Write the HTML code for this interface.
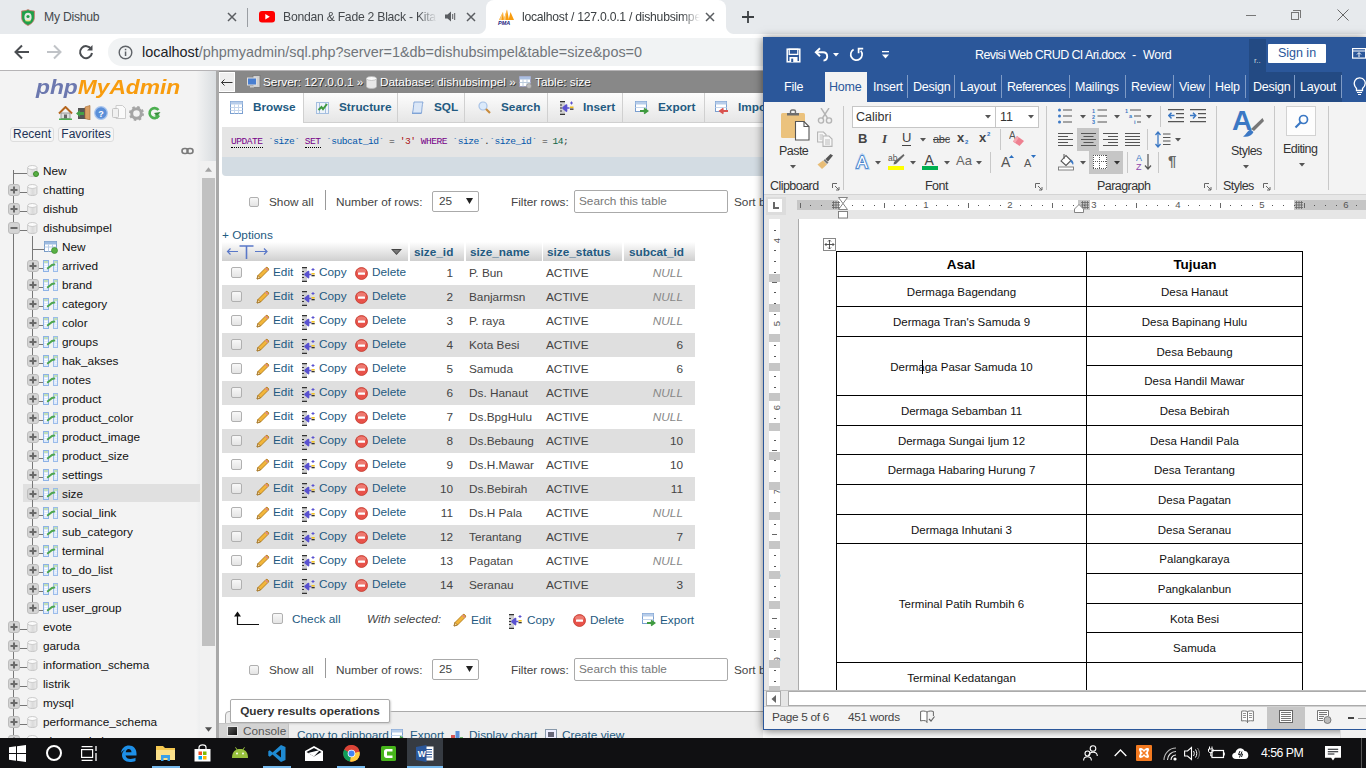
<!DOCTYPE html>
<html><head><meta charset="utf-8">
<style>
*{box-sizing:border-box;margin:0;padding:0}
html,body{width:1366px;height:768px;overflow:hidden;background:#fff;font-family:"Liberation Sans",sans-serif;}
.abs{position:absolute}
#root{position:relative;width:1366px;height:768px;overflow:hidden}
/* chrome */
#tabstrip{left:0;top:0;width:1366px;height:34px;background:#e7eaed}
#toolbar{left:0;top:34px;width:1366px;height:37px;background:#fff;border-bottom:1px solid #b6b4b6}
.tabtxt{letter-spacing:-0.25px;font-size:12.200px;color:#45494d;top:9px;line-height:16px;white-space:nowrap;overflow:hidden}
#url{left:108px;top:38px;width:700px;height:28px;border-radius:14px 0 0 14px;background:#f1f3f4}
/* pma nav */
#nav{left:0;top:71px;width:216px;height:667px;background:#f3f3f3;overflow:hidden}
#navres{left:216px;top:71px;width:3px;height:667px;background:#a9a9a9}
#main{left:219px;top:71px;width:544px;height:667px;background:#fff;overflow:hidden;font-size:13px;color:#444}
.tree{font-size:11.800px;color:#111;white-space:nowrap;height:19px;line-height:19px;margin-top:2px}
/* word */
#word{left:763px;top:37px;width:603px;height:693px;background:#f3f3f3;overflow:hidden;box-shadow:0 1px 9px rgba(0,0,0,.55)}
#wtitle{left:0;top:0;width:603px;height:35px;background:#2b579a}
#wtabs{left:0;top:35px;width:603px;height:30px;background:#2b579a}
#ribbon{left:0;top:65px;width:603px;height:93px;background:#f3f3f3;border-bottom:1px solid #d4d4d4}
/* taskbar */
#taskbar{left:0;top:738px;width:1366px;height:30px;background:#101012}
</style></head><body><div id="root">

<!-- CHROME -->
<div id="tabstrip" class="abs"></div>
<div class="abs" style="left:486px;top:0;width:240px;height:34px;background:#fff;border-radius:8px 8px 0 0"></div>
<div class="abs" style="left:478px;top:26px;width:8px;height:8px;background:radial-gradient(circle at 0 0,#e7eaed 7.5px,#fff 8.5px)"></div>
<div class="abs" style="left:726px;top:26px;width:8px;height:8px;background:radial-gradient(circle at 100% 0,#e7eaed 7.5px,#fff 8.5px)"></div>
<!-- tab1 -->
<svg class="abs" style="left:20.500px;top:8.500px" width="14" height="17" viewBox="0 0 14 17"><path d="M7 .6 C9 1.600 11.500 2 13.400 2 V8.500 C13.400 12.500 10 15.300 7 16.400 C4 15.300 .6 12.500 .6 8.500 V2 C2.500 2 5 1.600 7 .6Z" fill="#1ea049" stroke="#d8736e" stroke-width=".8"/><ellipse cx="7" cy="8" rx="3.600" ry="4.300" fill="#e4e8e2"/><circle cx="7" cy="7.500" r="1.600" fill="#1ea049"/><path d="M4.500 11.800 H9.500" stroke="#f2e36b" stroke-width="1"/></svg>
<div class="abs tabtxt" style="left:44px;width:170px">My Dishub</div>
<svg class="abs" style="left:227px;top:12px" width="10" height="10" viewBox="0 0 10 10"><path d="M1 1 L9 9 M9 1 L1 9" stroke="#5a5d61" stroke-width="1.500" fill="none"/></svg>
<div class="abs" style="left:247px;top:8px;width:1px;height:19px;background:#9a9ea3"></div>
<!-- tab2 -->
<svg class="abs" style="left:259px;top:11px" width="16" height="12" viewBox="0 0 16 12"><rect x="0" y="0" width="16" height="11.500" rx="3" fill="#f00"/><path d="M6.300 3 L10.800 5.750 L6.300 8.500 Z" fill="#fff"/></svg>
<div class="abs tabtxt" style="left:283px;width:154px;-webkit-mask-image:linear-gradient(90deg,#000 135px,transparent 154px)">Bondan &amp; Fade 2 Black - Kita</div>
<svg class="abs" style="left:444px;top:10px" width="13" height="13" viewBox="0 0 13 13"><path d="M1 4.500 H3.500 L7 1.500 V11.500 L3.500 8.500 H1 Z" fill="#5a5d61"/><path d="M8.700 4 V9 M10.700 3 V10" stroke="#5a5d61" stroke-width="1" fill="none"/></svg>
<svg class="abs" style="left:466px;top:12px" width="10" height="10" viewBox="0 0 10 10"><path d="M1 1 L9 9 M9 1 L1 9" stroke="#5a5d61" stroke-width="1.500" fill="none"/></svg>
<!-- tab3 -->
<svg class="abs" style="left:497px;top:9px" width="18" height="16" viewBox="0 0 18 16"><path d="M2 11 L6 3 L7 11 Z" fill="#f89c0e"/><path d="M6.500 11 L10 0.500 L12 11 Z" fill="#f89c0e"/><path d="M11.500 11 L13.500 3 L17 11 Z" fill="#f89c0e"/><path d="M2 11 L6 3 L4.500 11 Z M6.500 11 L10 .5 L8.500 11Z" fill="#fbc97a"/><text x="1" y="16" font-size="5.500" font-weight="bold" font-style="italic" fill="#1a237e" font-family="Liberation Sans">PMA</text></svg>
<div class="abs tabtxt" style="left:522px;width:178px;color:#3c4043;-webkit-mask-image:linear-gradient(90deg,#000 160px,transparent 178px)">localhost / 127.0.0.1 / dishubsimpel</div>
<svg class="abs" style="left:705px;top:12px" width="10" height="10" viewBox="0 0 10 10"><path d="M1 1 L9 9 M9 1 L1 9" stroke="#5a5d61" stroke-width="1.500" fill="none"/></svg>
<svg class="abs" style="left:741px;top:10px" width="14" height="14" viewBox="0 0 14 14"><path d="M7 1 V13 M1 7 H13" stroke="#3c4043" stroke-width="1.800" fill="none"/></svg>
<!-- win controls -->
<div class="abs" style="left:1246px;top:15px;width:10px;height:1px;background:#777"></div>
<div class="abs" style="left:1291px;top:12px;width:8px;height:8px;border:1px solid #777"></div>
<div class="abs" style="left:1293px;top:10px;width:8px;height:8px;border:1px solid #777;border-left:none;border-bottom:none"></div>
<svg class="abs" style="left:1337px;top:9px" width="12" height="12" viewBox="0 0 12 12"><path d="M.5 .5 L11.500 11.500 M11.500 .5 L.5 11.500" stroke="#666" stroke-width="1" fill="none"/></svg>
<div id="toolbar" class="abs"></div>
<div id="url" class="abs"></div>
<svg class="abs" style="left:14px;top:44px" width="16" height="16" viewBox="0 0 16 16"><path d="M15 8 H2.500 M8 1.500 L1.500 8 L8 14.500" stroke="#4a4d51" stroke-width="2" fill="none"/></svg>
<svg class="abs" style="left:46px;top:44px" width="16" height="16" viewBox="0 0 16 16"><path d="M1 8 H13.500 M8 1.500 L14.500 8 L8 14.500" stroke="#c0c3c7" stroke-width="2" fill="none"/></svg>
<svg class="abs" style="left:78px;top:44px" width="16" height="16" viewBox="0 0 16 16"><path d="M13.200 5 A6 6 0 1 0 14 9" stroke="#4a4d51" stroke-width="2" fill="none"/><path d="M14.500 1 V6.500 H9 Z" fill="#4a4d51"/></svg>
<svg class="abs" style="left:118px;top:45px" width="15" height="15" viewBox="0 0 15 15"><circle cx="7.500" cy="7.500" r="6.300" stroke="#5f6368" stroke-width="1.400" fill="none"/><rect x="6.800" y="6.500" width="1.500" height="4.500" fill="#5f6368"/><rect x="6.800" y="3.800" width="1.500" height="1.500" fill="#5f6368"/></svg>
<div class="abs" id="urltxt" style="left:142px;top:42px;font-size:14.400px;line-height:20px;color:#70757a;white-space:nowrap;letter-spacing:0px"><span style="color:#202124">localhost</span>/phpmyadmin/sql.php?server=1&amp;db=dishubsimpel&amp;table=size&amp;pos=0</div>

<!-- PMA -->
<div id="nav" class="abs">
<div class="abs" style="left:196px;top:0;width:20px;height:667px;background:linear-gradient(90deg,#f3f3f3,#d9dde0)"></div>
<div class="abs" style="left:36px;top:1px;font-size:21px;line-height:30px;font-weight:bold;font-style:italic;letter-spacing:0px;white-space:nowrap;transform:scaleX(1.085);transform-origin:0 0" id="logo"><span style="color:#6c78af">php</span><span style="color:#f89c0e">MyAdmin</span></div>
<svg class="abs" style="left:58px;top:35px" width="15" height="14" viewBox="0 0 15 14"><path d="M1 7.500 L7.500 1 L14 7.500" stroke="#b5651d" stroke-width="2" fill="none"/><rect x="3" y="7" width="9" height="5.500" fill="#ddd" stroke="#888" stroke-width=".8"/><rect x="6" y="8.500" width="3" height="4" fill="#666"/><rect x="1" y="12.500" width="13" height="1.500" fill="#4caf50"/></svg>
<svg class="abs" style="left:76px;top:34px" width="15" height="15" viewBox="0 0 15 15"><rect x="2" y="3" width="8" height="11" fill="#555"/><path d="M9 2 L14 0.500 V15 L9 13.500 Z" fill="#d9a066" stroke="#a86b32" stroke-width=".6"/><path d="M0 8.500 L4 5 V7 H8 V10 H4 V12 Z" fill="#43a047"/></svg>
<svg class="abs" style="left:94px;top:35px" width="14" height="14" viewBox="0 0 14 14"><circle cx="7" cy="7" r="6.300" fill="#5b8fd8" stroke="#a9c5ee" stroke-width="1.200"/><text x="7" y="10.500" font-size="9" font-weight="bold" fill="#fff" text-anchor="middle" font-family="Liberation Sans">?</text></svg>
<svg class="abs" style="left:112px;top:34px" width="14" height="15" viewBox="0 0 14 15"><path d="M4 .5 H10.500 L13.500 3.500 V13.500 H4 Z" fill="#fafafa" stroke="#ccc"/><rect x=".5" y="3.500" width="6" height="9" rx="1" fill="#f0f0f0" stroke="#c4c4c4"/></svg>
<svg class="abs" style="left:129px;top:35px" width="15" height="15" viewBox="0 0 15 15"><circle cx="7.500" cy="7.500" r="4.800" fill="none" stroke="#a5a5a5" stroke-width="3"/><circle cx="7.500" cy="7.500" r="6.500" fill="none" stroke="#a5a5a5" stroke-width="2" stroke-dasharray="2.550 2.550"/><circle cx="7.500" cy="7.500" r="2" fill="#f3f3f3"/></svg>
<svg class="abs" style="left:148px;top:35px" width="13" height="14" viewBox="0 0 13 14"><path d="M10.500 4 A5 5 0 1 0 11 9.500" stroke="#4caf50" stroke-width="2.600" fill="none"/><path d="M12.500 6 L6 7 L9 10.500 Z" fill="#388e3c"/><path d="M11.500 8.500 L9.500 13 L6.500 9.500Z" fill="#4caf50"/></svg>
<div class="abs" style="left:10px;top:56px;width:44px;height:15px;border:1px solid #ddd;border-radius:3px;background:#f5f5f5;font-size:12px;line-height:13px;text-align:center;color:#235">Recent</div>
<div class="abs" style="left:58px;top:56px;width:56px;height:15px;border:1px solid #ddd;border-radius:3px;background:#f5f5f5;font-size:12px;line-height:13px;text-align:center;color:#235">Favorites</div>
<svg class="abs" style="left:181px;top:76px" width="13" height="8" viewBox="0 0 13 8"><rect x="1" y="1.500" width="6" height="5" rx="2.500" fill="none" stroke="#7a7a7a" stroke-width="1.600"/><rect x="6" y="1.500" width="6" height="5" rx="2.500" fill="none" stroke="#7a7a7a" stroke-width="1.600"/></svg>
<div class="abs" style="left:23px;top:413px;width:177px;height:18px;background:#e0e0e0"></div>
<div class="abs" style="left:13px;top:99px;width:1px;height:590px;background:#777"></div>
<div class="abs" style="left:32px;top:165px;width:1px;height:371px;background:#777"></div>
<div class="abs" style="left:13px;top:102px;width:14px;height:1px;background:#777"></div>
<svg class="abs" style="left:27px;top:94px" width="11" height="12" viewBox="0 0 11 12"><defs><linearGradient id="dg94" x1="0" x2="1"><stop offset="0" stop-color="#f4f4f4"/><stop offset=".55" stop-color="#dadada"/><stop offset="1" stop-color="#ececec"/></linearGradient></defs><path d="M.7 2.500 V9.500 C.7 10.800 3 11.500 5.300 11.500 C7.600 11.500 9.900 10.800 9.900 9.500 V2.500" fill="url(#dg94)" stroke="#c2c2c2" stroke-width=".9"/><ellipse cx="5.300" cy="2.500" rx="4.600" ry="2" fill="#fbfbfb" stroke="#c6c6c6" stroke-width=".9"/></svg><circle cx="0" cy="0" r="0"/>
<div class="abs" style="left:33px;top:100px;width:6px;height:6px;border-radius:3px;background:#58b044;border:1px solid #3d8a2c"></div>
<div class="abs tree" style="left:43px;top:89px">New</div>
<div class="abs" style="left:13px;top:121px;width:14px;height:1px;background:#777"></div>
<svg class="abs" style="left:8px;top:113px" width="12" height="12" viewBox="0 0 12 12"><rect x=".5" y=".5" width="11" height="11" rx="2.500" fill="#d4d4d4" stroke="#bdbdbd"/><rect x="2.500" y="5" width="7" height="2" fill="#6a6a6a"/><rect x="5" y="2.500" width="2" height="7" fill="#6a6a6a"/></svg>
<svg class="abs" style="left:27px;top:113px" width="11" height="12" viewBox="0 0 11 12"><defs><linearGradient id="dg113" x1="0" x2="1"><stop offset="0" stop-color="#f4f4f4"/><stop offset=".55" stop-color="#dadada"/><stop offset="1" stop-color="#ececec"/></linearGradient></defs><path d="M.7 2.500 V9.500 C.7 10.800 3 11.500 5.300 11.500 C7.600 11.500 9.900 10.800 9.900 9.500 V2.500" fill="url(#dg113)" stroke="#c2c2c2" stroke-width=".9"/><ellipse cx="5.300" cy="2.500" rx="4.600" ry="2" fill="#fbfbfb" stroke="#c6c6c6" stroke-width=".9"/></svg>
<div class="abs tree" style="left:43px;top:108px">chatting</div>
<div class="abs" style="left:13px;top:140px;width:14px;height:1px;background:#777"></div>
<svg class="abs" style="left:8px;top:132px" width="12" height="12" viewBox="0 0 12 12"><rect x=".5" y=".5" width="11" height="11" rx="2.500" fill="#d4d4d4" stroke="#bdbdbd"/><rect x="2.500" y="5" width="7" height="2" fill="#6a6a6a"/><rect x="5" y="2.500" width="2" height="7" fill="#6a6a6a"/></svg>
<svg class="abs" style="left:27px;top:132px" width="11" height="12" viewBox="0 0 11 12"><defs><linearGradient id="dg132" x1="0" x2="1"><stop offset="0" stop-color="#f4f4f4"/><stop offset=".55" stop-color="#dadada"/><stop offset="1" stop-color="#ececec"/></linearGradient></defs><path d="M.7 2.500 V9.500 C.7 10.800 3 11.500 5.300 11.500 C7.600 11.500 9.900 10.800 9.900 9.500 V2.500" fill="url(#dg132)" stroke="#c2c2c2" stroke-width=".9"/><ellipse cx="5.300" cy="2.500" rx="4.600" ry="2" fill="#fbfbfb" stroke="#c6c6c6" stroke-width=".9"/></svg>
<div class="abs tree" style="left:43px;top:127px">dishub</div>
<div class="abs" style="left:13px;top:159px;width:14px;height:1px;background:#777"></div>
<svg class="abs" style="left:8px;top:151px" width="12" height="12" viewBox="0 0 12 12"><rect x=".5" y=".5" width="11" height="11" rx="2.500" fill="#d4d4d4" stroke="#bdbdbd"/><rect x="2.500" y="5" width="7" height="2" fill="#6a6a6a"/></svg>
<svg class="abs" style="left:27px;top:151px" width="11" height="12" viewBox="0 0 11 12"><defs><linearGradient id="dg151" x1="0" x2="1"><stop offset="0" stop-color="#f4f4f4"/><stop offset=".55" stop-color="#dadada"/><stop offset="1" stop-color="#ececec"/></linearGradient></defs><path d="M.7 2.500 V9.500 C.7 10.800 3 11.500 5.300 11.500 C7.600 11.500 9.900 10.800 9.900 9.500 V2.500" fill="url(#dg151)" stroke="#c2c2c2" stroke-width=".9"/><ellipse cx="5.300" cy="2.500" rx="4.600" ry="2" fill="#fbfbfb" stroke="#c6c6c6" stroke-width=".9"/></svg>
<div class="abs tree" style="left:43px;top:146px">dishubsimpel</div>
<div class="abs" style="left:32px;top:178px;width:14px;height:1px;background:#777"></div>
<svg class="abs" style="left:44px;top:170px" width="14" height="13" viewBox="0 0 14 13"><rect x=".5" y=".5" width="12" height="10" fill="#fff" stroke="#7a9cc6"/><rect x=".5" y=".5" width="12" height="3" fill="#9dbbe0"/><path d="M.5 6 H12.500 M4.500 3.500 V10.500 M8.500 3.500 V10.500" stroke="#b9cde6"/><circle cx="10.500" cy="9.500" r="3" fill="#58b044" stroke="#3d8a2c" stroke-width=".7"/></svg>
<div class="abs tree" style="left:62px;top:165px">New</div>
<div class="abs" style="left:32px;top:197px;width:12px;height:1px;background:#777"></div>
<svg class="abs" style="left:27px;top:189px" width="12" height="12" viewBox="0 0 12 12"><rect x=".5" y=".5" width="11" height="11" rx="2.500" fill="#d4d4d4" stroke="#bdbdbd"/><rect x="2.500" y="5" width="7" height="2" fill="#6a6a6a"/><rect x="5" y="2.500" width="2" height="7" fill="#6a6a6a"/></svg>
<svg class="abs" style="left:43px;top:189px" width="15" height="12" viewBox="0 0 15 12"><rect x=".5" y=".5" width="5" height="11" fill="#dfeafa" stroke="#8db2e6"/><rect x="10.500" y=".5" width="4" height="11" fill="#dfeafa" stroke="#9bbcea"/><rect x="1" y="1.300" width="4" height="1.400" fill="#b4dc9c"/><rect x="11" y="1.300" width="3.500" height="1.400" fill="#b4dc9c"/><path d="M1.500 4.500 H4.500 M1.500 6.500 H4.500 M1.500 8.500 H4.500 M12.500 4.500 H13.500 M12.500 6.500 H13.500 M12.500 8.500 H13.500" stroke="#fff" stroke-width="1"/><path d="M4.800 8.300 L9 5 L11.300 4.600" stroke="#4ea64e" stroke-width="2" fill="none" stroke-linecap="round"/></svg>
<div class="abs tree" style="left:62px;top:184px">arrived</div>
<div class="abs" style="left:32px;top:216px;width:12px;height:1px;background:#777"></div>
<svg class="abs" style="left:27px;top:208px" width="12" height="12" viewBox="0 0 12 12"><rect x=".5" y=".5" width="11" height="11" rx="2.500" fill="#d4d4d4" stroke="#bdbdbd"/><rect x="2.500" y="5" width="7" height="2" fill="#6a6a6a"/><rect x="5" y="2.500" width="2" height="7" fill="#6a6a6a"/></svg>
<svg class="abs" style="left:43px;top:208px" width="15" height="12" viewBox="0 0 15 12"><rect x=".5" y=".5" width="5" height="11" fill="#dfeafa" stroke="#8db2e6"/><rect x="10.500" y=".5" width="4" height="11" fill="#dfeafa" stroke="#9bbcea"/><rect x="1" y="1.300" width="4" height="1.400" fill="#b4dc9c"/><rect x="11" y="1.300" width="3.500" height="1.400" fill="#b4dc9c"/><path d="M1.500 4.500 H4.500 M1.500 6.500 H4.500 M1.500 8.500 H4.500 M12.500 4.500 H13.500 M12.500 6.500 H13.500 M12.500 8.500 H13.500" stroke="#fff" stroke-width="1"/><path d="M4.800 8.300 L9 5 L11.300 4.600" stroke="#4ea64e" stroke-width="2" fill="none" stroke-linecap="round"/></svg>
<div class="abs tree" style="left:62px;top:203px">brand</div>
<div class="abs" style="left:32px;top:235px;width:12px;height:1px;background:#777"></div>
<svg class="abs" style="left:27px;top:227px" width="12" height="12" viewBox="0 0 12 12"><rect x=".5" y=".5" width="11" height="11" rx="2.500" fill="#d4d4d4" stroke="#bdbdbd"/><rect x="2.500" y="5" width="7" height="2" fill="#6a6a6a"/><rect x="5" y="2.500" width="2" height="7" fill="#6a6a6a"/></svg>
<svg class="abs" style="left:43px;top:227px" width="15" height="12" viewBox="0 0 15 12"><rect x=".5" y=".5" width="5" height="11" fill="#dfeafa" stroke="#8db2e6"/><rect x="10.500" y=".5" width="4" height="11" fill="#dfeafa" stroke="#9bbcea"/><rect x="1" y="1.300" width="4" height="1.400" fill="#b4dc9c"/><rect x="11" y="1.300" width="3.500" height="1.400" fill="#b4dc9c"/><path d="M1.500 4.500 H4.500 M1.500 6.500 H4.500 M1.500 8.500 H4.500 M12.500 4.500 H13.500 M12.500 6.500 H13.500 M12.500 8.500 H13.500" stroke="#fff" stroke-width="1"/><path d="M4.800 8.300 L9 5 L11.300 4.600" stroke="#4ea64e" stroke-width="2" fill="none" stroke-linecap="round"/></svg>
<div class="abs tree" style="left:62px;top:222px">category</div>
<div class="abs" style="left:32px;top:254px;width:12px;height:1px;background:#777"></div>
<svg class="abs" style="left:27px;top:246px" width="12" height="12" viewBox="0 0 12 12"><rect x=".5" y=".5" width="11" height="11" rx="2.500" fill="#d4d4d4" stroke="#bdbdbd"/><rect x="2.500" y="5" width="7" height="2" fill="#6a6a6a"/><rect x="5" y="2.500" width="2" height="7" fill="#6a6a6a"/></svg>
<svg class="abs" style="left:43px;top:246px" width="15" height="12" viewBox="0 0 15 12"><rect x=".5" y=".5" width="5" height="11" fill="#dfeafa" stroke="#8db2e6"/><rect x="10.500" y=".5" width="4" height="11" fill="#dfeafa" stroke="#9bbcea"/><rect x="1" y="1.300" width="4" height="1.400" fill="#b4dc9c"/><rect x="11" y="1.300" width="3.500" height="1.400" fill="#b4dc9c"/><path d="M1.500 4.500 H4.500 M1.500 6.500 H4.500 M1.500 8.500 H4.500 M12.500 4.500 H13.500 M12.500 6.500 H13.500 M12.500 8.500 H13.500" stroke="#fff" stroke-width="1"/><path d="M4.800 8.300 L9 5 L11.300 4.600" stroke="#4ea64e" stroke-width="2" fill="none" stroke-linecap="round"/></svg>
<div class="abs tree" style="left:62px;top:241px">color</div>
<div class="abs" style="left:32px;top:273px;width:12px;height:1px;background:#777"></div>
<svg class="abs" style="left:27px;top:265px" width="12" height="12" viewBox="0 0 12 12"><rect x=".5" y=".5" width="11" height="11" rx="2.500" fill="#d4d4d4" stroke="#bdbdbd"/><rect x="2.500" y="5" width="7" height="2" fill="#6a6a6a"/><rect x="5" y="2.500" width="2" height="7" fill="#6a6a6a"/></svg>
<svg class="abs" style="left:43px;top:265px" width="15" height="12" viewBox="0 0 15 12"><rect x=".5" y=".5" width="5" height="11" fill="#dfeafa" stroke="#8db2e6"/><rect x="10.500" y=".5" width="4" height="11" fill="#dfeafa" stroke="#9bbcea"/><rect x="1" y="1.300" width="4" height="1.400" fill="#b4dc9c"/><rect x="11" y="1.300" width="3.500" height="1.400" fill="#b4dc9c"/><path d="M1.500 4.500 H4.500 M1.500 6.500 H4.500 M1.500 8.500 H4.500 M12.500 4.500 H13.500 M12.500 6.500 H13.500 M12.500 8.500 H13.500" stroke="#fff" stroke-width="1"/><path d="M4.800 8.300 L9 5 L11.300 4.600" stroke="#4ea64e" stroke-width="2" fill="none" stroke-linecap="round"/></svg>
<div class="abs tree" style="left:62px;top:260px">groups</div>
<div class="abs" style="left:32px;top:292px;width:12px;height:1px;background:#777"></div>
<svg class="abs" style="left:27px;top:284px" width="12" height="12" viewBox="0 0 12 12"><rect x=".5" y=".5" width="11" height="11" rx="2.500" fill="#d4d4d4" stroke="#bdbdbd"/><rect x="2.500" y="5" width="7" height="2" fill="#6a6a6a"/><rect x="5" y="2.500" width="2" height="7" fill="#6a6a6a"/></svg>
<svg class="abs" style="left:43px;top:284px" width="15" height="12" viewBox="0 0 15 12"><rect x=".5" y=".5" width="5" height="11" fill="#dfeafa" stroke="#8db2e6"/><rect x="10.500" y=".5" width="4" height="11" fill="#dfeafa" stroke="#9bbcea"/><rect x="1" y="1.300" width="4" height="1.400" fill="#b4dc9c"/><rect x="11" y="1.300" width="3.500" height="1.400" fill="#b4dc9c"/><path d="M1.500 4.500 H4.500 M1.500 6.500 H4.500 M1.500 8.500 H4.500 M12.500 4.500 H13.500 M12.500 6.500 H13.500 M12.500 8.500 H13.500" stroke="#fff" stroke-width="1"/><path d="M4.800 8.300 L9 5 L11.300 4.600" stroke="#4ea64e" stroke-width="2" fill="none" stroke-linecap="round"/></svg>
<div class="abs tree" style="left:62px;top:279px">hak_akses</div>
<div class="abs" style="left:32px;top:311px;width:12px;height:1px;background:#777"></div>
<svg class="abs" style="left:27px;top:303px" width="12" height="12" viewBox="0 0 12 12"><rect x=".5" y=".5" width="11" height="11" rx="2.500" fill="#d4d4d4" stroke="#bdbdbd"/><rect x="2.500" y="5" width="7" height="2" fill="#6a6a6a"/><rect x="5" y="2.500" width="2" height="7" fill="#6a6a6a"/></svg>
<svg class="abs" style="left:43px;top:303px" width="15" height="12" viewBox="0 0 15 12"><rect x=".5" y=".5" width="5" height="11" fill="#dfeafa" stroke="#8db2e6"/><rect x="10.500" y=".5" width="4" height="11" fill="#dfeafa" stroke="#9bbcea"/><rect x="1" y="1.300" width="4" height="1.400" fill="#b4dc9c"/><rect x="11" y="1.300" width="3.500" height="1.400" fill="#b4dc9c"/><path d="M1.500 4.500 H4.500 M1.500 6.500 H4.500 M1.500 8.500 H4.500 M12.500 4.500 H13.500 M12.500 6.500 H13.500 M12.500 8.500 H13.500" stroke="#fff" stroke-width="1"/><path d="M4.800 8.300 L9 5 L11.300 4.600" stroke="#4ea64e" stroke-width="2" fill="none" stroke-linecap="round"/></svg>
<div class="abs tree" style="left:62px;top:298px">notes</div>
<div class="abs" style="left:32px;top:330px;width:12px;height:1px;background:#777"></div>
<svg class="abs" style="left:27px;top:322px" width="12" height="12" viewBox="0 0 12 12"><rect x=".5" y=".5" width="11" height="11" rx="2.500" fill="#d4d4d4" stroke="#bdbdbd"/><rect x="2.500" y="5" width="7" height="2" fill="#6a6a6a"/><rect x="5" y="2.500" width="2" height="7" fill="#6a6a6a"/></svg>
<svg class="abs" style="left:43px;top:322px" width="15" height="12" viewBox="0 0 15 12"><rect x=".5" y=".5" width="5" height="11" fill="#dfeafa" stroke="#8db2e6"/><rect x="10.500" y=".5" width="4" height="11" fill="#dfeafa" stroke="#9bbcea"/><rect x="1" y="1.300" width="4" height="1.400" fill="#b4dc9c"/><rect x="11" y="1.300" width="3.500" height="1.400" fill="#b4dc9c"/><path d="M1.500 4.500 H4.500 M1.500 6.500 H4.500 M1.500 8.500 H4.500 M12.500 4.500 H13.500 M12.500 6.500 H13.500 M12.500 8.500 H13.500" stroke="#fff" stroke-width="1"/><path d="M4.800 8.300 L9 5 L11.300 4.600" stroke="#4ea64e" stroke-width="2" fill="none" stroke-linecap="round"/></svg>
<div class="abs tree" style="left:62px;top:317px">product</div>
<div class="abs" style="left:32px;top:349px;width:12px;height:1px;background:#777"></div>
<svg class="abs" style="left:27px;top:341px" width="12" height="12" viewBox="0 0 12 12"><rect x=".5" y=".5" width="11" height="11" rx="2.500" fill="#d4d4d4" stroke="#bdbdbd"/><rect x="2.500" y="5" width="7" height="2" fill="#6a6a6a"/><rect x="5" y="2.500" width="2" height="7" fill="#6a6a6a"/></svg>
<svg class="abs" style="left:43px;top:341px" width="15" height="12" viewBox="0 0 15 12"><rect x=".5" y=".5" width="5" height="11" fill="#dfeafa" stroke="#8db2e6"/><rect x="10.500" y=".5" width="4" height="11" fill="#dfeafa" stroke="#9bbcea"/><rect x="1" y="1.300" width="4" height="1.400" fill="#b4dc9c"/><rect x="11" y="1.300" width="3.500" height="1.400" fill="#b4dc9c"/><path d="M1.500 4.500 H4.500 M1.500 6.500 H4.500 M1.500 8.500 H4.500 M12.500 4.500 H13.500 M12.500 6.500 H13.500 M12.500 8.500 H13.500" stroke="#fff" stroke-width="1"/><path d="M4.800 8.300 L9 5 L11.300 4.600" stroke="#4ea64e" stroke-width="2" fill="none" stroke-linecap="round"/></svg>
<div class="abs tree" style="left:62px;top:336px">product_color</div>
<div class="abs" style="left:32px;top:368px;width:12px;height:1px;background:#777"></div>
<svg class="abs" style="left:27px;top:360px" width="12" height="12" viewBox="0 0 12 12"><rect x=".5" y=".5" width="11" height="11" rx="2.500" fill="#d4d4d4" stroke="#bdbdbd"/><rect x="2.500" y="5" width="7" height="2" fill="#6a6a6a"/><rect x="5" y="2.500" width="2" height="7" fill="#6a6a6a"/></svg>
<svg class="abs" style="left:43px;top:360px" width="15" height="12" viewBox="0 0 15 12"><rect x=".5" y=".5" width="5" height="11" fill="#dfeafa" stroke="#8db2e6"/><rect x="10.500" y=".5" width="4" height="11" fill="#dfeafa" stroke="#9bbcea"/><rect x="1" y="1.300" width="4" height="1.400" fill="#b4dc9c"/><rect x="11" y="1.300" width="3.500" height="1.400" fill="#b4dc9c"/><path d="M1.500 4.500 H4.500 M1.500 6.500 H4.500 M1.500 8.500 H4.500 M12.500 4.500 H13.500 M12.500 6.500 H13.500 M12.500 8.500 H13.500" stroke="#fff" stroke-width="1"/><path d="M4.800 8.300 L9 5 L11.300 4.600" stroke="#4ea64e" stroke-width="2" fill="none" stroke-linecap="round"/></svg>
<div class="abs tree" style="left:62px;top:355px">product_image</div>
<div class="abs" style="left:32px;top:387px;width:12px;height:1px;background:#777"></div>
<svg class="abs" style="left:27px;top:379px" width="12" height="12" viewBox="0 0 12 12"><rect x=".5" y=".5" width="11" height="11" rx="2.500" fill="#d4d4d4" stroke="#bdbdbd"/><rect x="2.500" y="5" width="7" height="2" fill="#6a6a6a"/><rect x="5" y="2.500" width="2" height="7" fill="#6a6a6a"/></svg>
<svg class="abs" style="left:43px;top:379px" width="15" height="12" viewBox="0 0 15 12"><rect x=".5" y=".5" width="5" height="11" fill="#dfeafa" stroke="#8db2e6"/><rect x="10.500" y=".5" width="4" height="11" fill="#dfeafa" stroke="#9bbcea"/><rect x="1" y="1.300" width="4" height="1.400" fill="#b4dc9c"/><rect x="11" y="1.300" width="3.500" height="1.400" fill="#b4dc9c"/><path d="M1.500 4.500 H4.500 M1.500 6.500 H4.500 M1.500 8.500 H4.500 M12.500 4.500 H13.500 M12.500 6.500 H13.500 M12.500 8.500 H13.500" stroke="#fff" stroke-width="1"/><path d="M4.800 8.300 L9 5 L11.300 4.600" stroke="#4ea64e" stroke-width="2" fill="none" stroke-linecap="round"/></svg>
<div class="abs tree" style="left:62px;top:374px">product_size</div>
<div class="abs" style="left:32px;top:406px;width:12px;height:1px;background:#777"></div>
<svg class="abs" style="left:27px;top:398px" width="12" height="12" viewBox="0 0 12 12"><rect x=".5" y=".5" width="11" height="11" rx="2.500" fill="#d4d4d4" stroke="#bdbdbd"/><rect x="2.500" y="5" width="7" height="2" fill="#6a6a6a"/><rect x="5" y="2.500" width="2" height="7" fill="#6a6a6a"/></svg>
<svg class="abs" style="left:43px;top:398px" width="15" height="12" viewBox="0 0 15 12"><rect x=".5" y=".5" width="5" height="11" fill="#dfeafa" stroke="#8db2e6"/><rect x="10.500" y=".5" width="4" height="11" fill="#dfeafa" stroke="#9bbcea"/><rect x="1" y="1.300" width="4" height="1.400" fill="#b4dc9c"/><rect x="11" y="1.300" width="3.500" height="1.400" fill="#b4dc9c"/><path d="M1.500 4.500 H4.500 M1.500 6.500 H4.500 M1.500 8.500 H4.500 M12.500 4.500 H13.500 M12.500 6.500 H13.500 M12.500 8.500 H13.500" stroke="#fff" stroke-width="1"/><path d="M4.800 8.300 L9 5 L11.300 4.600" stroke="#4ea64e" stroke-width="2" fill="none" stroke-linecap="round"/></svg>
<div class="abs tree" style="left:62px;top:393px">settings</div>
<div class="abs" style="left:32px;top:425px;width:12px;height:1px;background:#777"></div>
<svg class="abs" style="left:27px;top:417px" width="12" height="12" viewBox="0 0 12 12"><rect x=".5" y=".5" width="11" height="11" rx="2.500" fill="#d4d4d4" stroke="#bdbdbd"/><rect x="2.500" y="5" width="7" height="2" fill="#6a6a6a"/><rect x="5" y="2.500" width="2" height="7" fill="#6a6a6a"/></svg>
<svg class="abs" style="left:43px;top:417px" width="15" height="12" viewBox="0 0 15 12"><rect x=".5" y=".5" width="5" height="11" fill="#dfeafa" stroke="#8db2e6"/><rect x="10.500" y=".5" width="4" height="11" fill="#dfeafa" stroke="#9bbcea"/><rect x="1" y="1.300" width="4" height="1.400" fill="#b4dc9c"/><rect x="11" y="1.300" width="3.500" height="1.400" fill="#b4dc9c"/><path d="M1.500 4.500 H4.500 M1.500 6.500 H4.500 M1.500 8.500 H4.500 M12.500 4.500 H13.500 M12.500 6.500 H13.500 M12.500 8.500 H13.500" stroke="#fff" stroke-width="1"/><path d="M4.800 8.300 L9 5 L11.300 4.600" stroke="#4ea64e" stroke-width="2" fill="none" stroke-linecap="round"/></svg>
<div class="abs tree" style="left:62px;top:412px">size</div>
<div class="abs" style="left:32px;top:444px;width:12px;height:1px;background:#777"></div>
<svg class="abs" style="left:27px;top:436px" width="12" height="12" viewBox="0 0 12 12"><rect x=".5" y=".5" width="11" height="11" rx="2.500" fill="#d4d4d4" stroke="#bdbdbd"/><rect x="2.500" y="5" width="7" height="2" fill="#6a6a6a"/><rect x="5" y="2.500" width="2" height="7" fill="#6a6a6a"/></svg>
<svg class="abs" style="left:43px;top:436px" width="15" height="12" viewBox="0 0 15 12"><rect x=".5" y=".5" width="5" height="11" fill="#dfeafa" stroke="#8db2e6"/><rect x="10.500" y=".5" width="4" height="11" fill="#dfeafa" stroke="#9bbcea"/><rect x="1" y="1.300" width="4" height="1.400" fill="#b4dc9c"/><rect x="11" y="1.300" width="3.500" height="1.400" fill="#b4dc9c"/><path d="M1.500 4.500 H4.500 M1.500 6.500 H4.500 M1.500 8.500 H4.500 M12.500 4.500 H13.500 M12.500 6.500 H13.500 M12.500 8.500 H13.500" stroke="#fff" stroke-width="1"/><path d="M4.800 8.300 L9 5 L11.300 4.600" stroke="#4ea64e" stroke-width="2" fill="none" stroke-linecap="round"/></svg>
<div class="abs tree" style="left:62px;top:431px">social_link</div>
<div class="abs" style="left:32px;top:463px;width:12px;height:1px;background:#777"></div>
<svg class="abs" style="left:27px;top:455px" width="12" height="12" viewBox="0 0 12 12"><rect x=".5" y=".5" width="11" height="11" rx="2.500" fill="#d4d4d4" stroke="#bdbdbd"/><rect x="2.500" y="5" width="7" height="2" fill="#6a6a6a"/><rect x="5" y="2.500" width="2" height="7" fill="#6a6a6a"/></svg>
<svg class="abs" style="left:43px;top:455px" width="15" height="12" viewBox="0 0 15 12"><rect x=".5" y=".5" width="5" height="11" fill="#dfeafa" stroke="#8db2e6"/><rect x="10.500" y=".5" width="4" height="11" fill="#dfeafa" stroke="#9bbcea"/><rect x="1" y="1.300" width="4" height="1.400" fill="#b4dc9c"/><rect x="11" y="1.300" width="3.500" height="1.400" fill="#b4dc9c"/><path d="M1.500 4.500 H4.500 M1.500 6.500 H4.500 M1.500 8.500 H4.500 M12.500 4.500 H13.500 M12.500 6.500 H13.500 M12.500 8.500 H13.500" stroke="#fff" stroke-width="1"/><path d="M4.800 8.300 L9 5 L11.300 4.600" stroke="#4ea64e" stroke-width="2" fill="none" stroke-linecap="round"/></svg>
<div class="abs tree" style="left:62px;top:450px">sub_category</div>
<div class="abs" style="left:32px;top:482px;width:12px;height:1px;background:#777"></div>
<svg class="abs" style="left:27px;top:474px" width="12" height="12" viewBox="0 0 12 12"><rect x=".5" y=".5" width="11" height="11" rx="2.500" fill="#d4d4d4" stroke="#bdbdbd"/><rect x="2.500" y="5" width="7" height="2" fill="#6a6a6a"/><rect x="5" y="2.500" width="2" height="7" fill="#6a6a6a"/></svg>
<svg class="abs" style="left:43px;top:474px" width="15" height="12" viewBox="0 0 15 12"><rect x=".5" y=".5" width="5" height="11" fill="#dfeafa" stroke="#8db2e6"/><rect x="10.500" y=".5" width="4" height="11" fill="#dfeafa" stroke="#9bbcea"/><rect x="1" y="1.300" width="4" height="1.400" fill="#b4dc9c"/><rect x="11" y="1.300" width="3.500" height="1.400" fill="#b4dc9c"/><path d="M1.500 4.500 H4.500 M1.500 6.500 H4.500 M1.500 8.500 H4.500 M12.500 4.500 H13.500 M12.500 6.500 H13.500 M12.500 8.500 H13.500" stroke="#fff" stroke-width="1"/><path d="M4.800 8.300 L9 5 L11.300 4.600" stroke="#4ea64e" stroke-width="2" fill="none" stroke-linecap="round"/></svg>
<div class="abs tree" style="left:62px;top:469px">terminal</div>
<div class="abs" style="left:32px;top:501px;width:12px;height:1px;background:#777"></div>
<svg class="abs" style="left:27px;top:493px" width="12" height="12" viewBox="0 0 12 12"><rect x=".5" y=".5" width="11" height="11" rx="2.500" fill="#d4d4d4" stroke="#bdbdbd"/><rect x="2.500" y="5" width="7" height="2" fill="#6a6a6a"/><rect x="5" y="2.500" width="2" height="7" fill="#6a6a6a"/></svg>
<svg class="abs" style="left:43px;top:493px" width="15" height="12" viewBox="0 0 15 12"><rect x=".5" y=".5" width="5" height="11" fill="#dfeafa" stroke="#8db2e6"/><rect x="10.500" y=".5" width="4" height="11" fill="#dfeafa" stroke="#9bbcea"/><rect x="1" y="1.300" width="4" height="1.400" fill="#b4dc9c"/><rect x="11" y="1.300" width="3.500" height="1.400" fill="#b4dc9c"/><path d="M1.500 4.500 H4.500 M1.500 6.500 H4.500 M1.500 8.500 H4.500 M12.500 4.500 H13.500 M12.500 6.500 H13.500 M12.500 8.500 H13.500" stroke="#fff" stroke-width="1"/><path d="M4.800 8.300 L9 5 L11.300 4.600" stroke="#4ea64e" stroke-width="2" fill="none" stroke-linecap="round"/></svg>
<div class="abs tree" style="left:62px;top:488px">to_do_list</div>
<div class="abs" style="left:32px;top:520px;width:12px;height:1px;background:#777"></div>
<svg class="abs" style="left:27px;top:512px" width="12" height="12" viewBox="0 0 12 12"><rect x=".5" y=".5" width="11" height="11" rx="2.500" fill="#d4d4d4" stroke="#bdbdbd"/><rect x="2.500" y="5" width="7" height="2" fill="#6a6a6a"/><rect x="5" y="2.500" width="2" height="7" fill="#6a6a6a"/></svg>
<svg class="abs" style="left:43px;top:512px" width="15" height="12" viewBox="0 0 15 12"><rect x=".5" y=".5" width="5" height="11" fill="#dfeafa" stroke="#8db2e6"/><rect x="10.500" y=".5" width="4" height="11" fill="#dfeafa" stroke="#9bbcea"/><rect x="1" y="1.300" width="4" height="1.400" fill="#b4dc9c"/><rect x="11" y="1.300" width="3.500" height="1.400" fill="#b4dc9c"/><path d="M1.500 4.500 H4.500 M1.500 6.500 H4.500 M1.500 8.500 H4.500 M12.500 4.500 H13.500 M12.500 6.500 H13.500 M12.500 8.500 H13.500" stroke="#fff" stroke-width="1"/><path d="M4.800 8.300 L9 5 L11.300 4.600" stroke="#4ea64e" stroke-width="2" fill="none" stroke-linecap="round"/></svg>
<div class="abs tree" style="left:62px;top:507px">users</div>
<div class="abs" style="left:32px;top:539px;width:12px;height:1px;background:#777"></div>
<svg class="abs" style="left:27px;top:531px" width="12" height="12" viewBox="0 0 12 12"><rect x=".5" y=".5" width="11" height="11" rx="2.500" fill="#d4d4d4" stroke="#bdbdbd"/><rect x="2.500" y="5" width="7" height="2" fill="#6a6a6a"/><rect x="5" y="2.500" width="2" height="7" fill="#6a6a6a"/></svg>
<svg class="abs" style="left:43px;top:531px" width="15" height="12" viewBox="0 0 15 12"><rect x=".5" y=".5" width="5" height="11" fill="#dfeafa" stroke="#8db2e6"/><rect x="10.500" y=".5" width="4" height="11" fill="#dfeafa" stroke="#9bbcea"/><rect x="1" y="1.300" width="4" height="1.400" fill="#b4dc9c"/><rect x="11" y="1.300" width="3.500" height="1.400" fill="#b4dc9c"/><path d="M1.500 4.500 H4.500 M1.500 6.500 H4.500 M1.500 8.500 H4.500 M12.500 4.500 H13.500 M12.500 6.500 H13.500 M12.500 8.500 H13.500" stroke="#fff" stroke-width="1"/><path d="M4.800 8.300 L9 5 L11.300 4.600" stroke="#4ea64e" stroke-width="2" fill="none" stroke-linecap="round"/></svg>
<div class="abs tree" style="left:62px;top:526px">user_group</div>
<div class="abs" style="left:13px;top:558px;width:14px;height:1px;background:#777"></div>
<svg class="abs" style="left:8px;top:550px" width="12" height="12" viewBox="0 0 12 12"><rect x=".5" y=".5" width="11" height="11" rx="2.500" fill="#d4d4d4" stroke="#bdbdbd"/><rect x="2.500" y="5" width="7" height="2" fill="#6a6a6a"/><rect x="5" y="2.500" width="2" height="7" fill="#6a6a6a"/></svg>
<svg class="abs" style="left:27px;top:550px" width="11" height="12" viewBox="0 0 11 12"><defs><linearGradient id="dg550" x1="0" x2="1"><stop offset="0" stop-color="#f4f4f4"/><stop offset=".55" stop-color="#dadada"/><stop offset="1" stop-color="#ececec"/></linearGradient></defs><path d="M.7 2.500 V9.500 C.7 10.800 3 11.500 5.300 11.500 C7.600 11.500 9.900 10.800 9.900 9.500 V2.500" fill="url(#dg550)" stroke="#c2c2c2" stroke-width=".9"/><ellipse cx="5.300" cy="2.500" rx="4.600" ry="2" fill="#fbfbfb" stroke="#c6c6c6" stroke-width=".9"/></svg>
<div class="abs tree" style="left:43px;top:545px">evote</div>
<div class="abs" style="left:13px;top:577px;width:14px;height:1px;background:#777"></div>
<svg class="abs" style="left:8px;top:569px" width="12" height="12" viewBox="0 0 12 12"><rect x=".5" y=".5" width="11" height="11" rx="2.500" fill="#d4d4d4" stroke="#bdbdbd"/><rect x="2.500" y="5" width="7" height="2" fill="#6a6a6a"/><rect x="5" y="2.500" width="2" height="7" fill="#6a6a6a"/></svg>
<svg class="abs" style="left:27px;top:569px" width="11" height="12" viewBox="0 0 11 12"><defs><linearGradient id="dg569" x1="0" x2="1"><stop offset="0" stop-color="#f4f4f4"/><stop offset=".55" stop-color="#dadada"/><stop offset="1" stop-color="#ececec"/></linearGradient></defs><path d="M.7 2.500 V9.500 C.7 10.800 3 11.500 5.300 11.500 C7.600 11.500 9.900 10.800 9.900 9.500 V2.500" fill="url(#dg569)" stroke="#c2c2c2" stroke-width=".9"/><ellipse cx="5.300" cy="2.500" rx="4.600" ry="2" fill="#fbfbfb" stroke="#c6c6c6" stroke-width=".9"/></svg>
<div class="abs tree" style="left:43px;top:564px">garuda</div>
<div class="abs" style="left:13px;top:596px;width:14px;height:1px;background:#777"></div>
<svg class="abs" style="left:8px;top:588px" width="12" height="12" viewBox="0 0 12 12"><rect x=".5" y=".5" width="11" height="11" rx="2.500" fill="#d4d4d4" stroke="#bdbdbd"/><rect x="2.500" y="5" width="7" height="2" fill="#6a6a6a"/><rect x="5" y="2.500" width="2" height="7" fill="#6a6a6a"/></svg>
<svg class="abs" style="left:27px;top:588px" width="11" height="12" viewBox="0 0 11 12"><defs><linearGradient id="dg588" x1="0" x2="1"><stop offset="0" stop-color="#f4f4f4"/><stop offset=".55" stop-color="#dadada"/><stop offset="1" stop-color="#ececec"/></linearGradient></defs><path d="M.7 2.500 V9.500 C.7 10.800 3 11.500 5.300 11.500 C7.600 11.500 9.900 10.800 9.900 9.500 V2.500" fill="url(#dg588)" stroke="#c2c2c2" stroke-width=".9"/><ellipse cx="5.300" cy="2.500" rx="4.600" ry="2" fill="#fbfbfb" stroke="#c6c6c6" stroke-width=".9"/></svg>
<div class="abs tree" style="left:43px;top:583px">information_schema</div>
<div class="abs" style="left:13px;top:615px;width:14px;height:1px;background:#777"></div>
<svg class="abs" style="left:8px;top:607px" width="12" height="12" viewBox="0 0 12 12"><rect x=".5" y=".5" width="11" height="11" rx="2.500" fill="#d4d4d4" stroke="#bdbdbd"/><rect x="2.500" y="5" width="7" height="2" fill="#6a6a6a"/><rect x="5" y="2.500" width="2" height="7" fill="#6a6a6a"/></svg>
<svg class="abs" style="left:27px;top:607px" width="11" height="12" viewBox="0 0 11 12"><defs><linearGradient id="dg607" x1="0" x2="1"><stop offset="0" stop-color="#f4f4f4"/><stop offset=".55" stop-color="#dadada"/><stop offset="1" stop-color="#ececec"/></linearGradient></defs><path d="M.7 2.500 V9.500 C.7 10.800 3 11.500 5.300 11.500 C7.600 11.500 9.900 10.800 9.900 9.500 V2.500" fill="url(#dg607)" stroke="#c2c2c2" stroke-width=".9"/><ellipse cx="5.300" cy="2.500" rx="4.600" ry="2" fill="#fbfbfb" stroke="#c6c6c6" stroke-width=".9"/></svg>
<div class="abs tree" style="left:43px;top:602px">listrik</div>
<div class="abs" style="left:13px;top:634px;width:14px;height:1px;background:#777"></div>
<svg class="abs" style="left:8px;top:626px" width="12" height="12" viewBox="0 0 12 12"><rect x=".5" y=".5" width="11" height="11" rx="2.500" fill="#d4d4d4" stroke="#bdbdbd"/><rect x="2.500" y="5" width="7" height="2" fill="#6a6a6a"/><rect x="5" y="2.500" width="2" height="7" fill="#6a6a6a"/></svg>
<svg class="abs" style="left:27px;top:626px" width="11" height="12" viewBox="0 0 11 12"><defs><linearGradient id="dg626" x1="0" x2="1"><stop offset="0" stop-color="#f4f4f4"/><stop offset=".55" stop-color="#dadada"/><stop offset="1" stop-color="#ececec"/></linearGradient></defs><path d="M.7 2.500 V9.500 C.7 10.800 3 11.500 5.300 11.500 C7.600 11.500 9.900 10.800 9.900 9.500 V2.500" fill="url(#dg626)" stroke="#c2c2c2" stroke-width=".9"/><ellipse cx="5.300" cy="2.500" rx="4.600" ry="2" fill="#fbfbfb" stroke="#c6c6c6" stroke-width=".9"/></svg>
<div class="abs tree" style="left:43px;top:621px">mysql</div>
<div class="abs" style="left:13px;top:653px;width:14px;height:1px;background:#777"></div>
<svg class="abs" style="left:8px;top:645px" width="12" height="12" viewBox="0 0 12 12"><rect x=".5" y=".5" width="11" height="11" rx="2.500" fill="#d4d4d4" stroke="#bdbdbd"/><rect x="2.500" y="5" width="7" height="2" fill="#6a6a6a"/><rect x="5" y="2.500" width="2" height="7" fill="#6a6a6a"/></svg>
<svg class="abs" style="left:27px;top:645px" width="11" height="12" viewBox="0 0 11 12"><defs><linearGradient id="dg645" x1="0" x2="1"><stop offset="0" stop-color="#f4f4f4"/><stop offset=".55" stop-color="#dadada"/><stop offset="1" stop-color="#ececec"/></linearGradient></defs><path d="M.7 2.500 V9.500 C.7 10.800 3 11.500 5.300 11.500 C7.600 11.500 9.900 10.800 9.900 9.500 V2.500" fill="url(#dg645)" stroke="#c2c2c2" stroke-width=".9"/><ellipse cx="5.300" cy="2.500" rx="4.600" ry="2" fill="#fbfbfb" stroke="#c6c6c6" stroke-width=".9"/></svg>
<div class="abs tree" style="left:43px;top:640px">performance_schema</div>
<div class="abs" style="left:13px;top:672px;width:14px;height:1px;background:#777"></div>
<svg class="abs" style="left:8px;top:664px" width="12" height="12" viewBox="0 0 12 12"><rect x=".5" y=".5" width="11" height="11" rx="2.500" fill="#d4d4d4" stroke="#bdbdbd"/><rect x="2.500" y="5" width="7" height="2" fill="#6a6a6a"/><rect x="5" y="2.500" width="2" height="7" fill="#6a6a6a"/></svg>
<svg class="abs" style="left:27px;top:664px" width="11" height="12" viewBox="0 0 11 12"><defs><linearGradient id="dg664" x1="0" x2="1"><stop offset="0" stop-color="#f4f4f4"/><stop offset=".55" stop-color="#dadada"/><stop offset="1" stop-color="#ececec"/></linearGradient></defs><path d="M.7 2.500 V9.500 C.7 10.800 3 11.500 5.300 11.500 C7.600 11.500 9.900 10.800 9.900 9.500 V2.500" fill="url(#dg664)" stroke="#c2c2c2" stroke-width=".9"/><ellipse cx="5.300" cy="2.500" rx="4.600" ry="2" fill="#fbfbfb" stroke="#c6c6c6" stroke-width=".9"/></svg>
<div class="abs tree" style="left:43px;top:659px">phpmyadmin</div>
<div class="abs" style="left:200px;top:90px;width:16px;height:577px;background:#f1f1f1"></div>
<div class="abs" style="left:202px;top:107px;width:13px;height:468px;background:#c1c1c1"></div>
<svg class="abs" style="left:205px;top:96px" width="7" height="5" viewBox="0 0 8 5"><path d="M0 5 L4 0 L8 5Z" fill="#a3a3a3"/></svg>
<svg class="abs" style="left:205px;top:656px" width="7" height="5" viewBox="0 0 8 5"><path d="M0 0 L4 5 L8 0Z" fill="#505050"/></svg>
</div>
<div id="navres" class="abs"></div>
<div id="main" class="abs">
<div class="abs" style="left:0;top:0;width:544px;height:22px;background:#888"></div>
<div class="abs" style="left:0;top:1px;width:16px;height:20px;background:#eee;border:1px solid #fff"></div><svg class="abs" style="left:2px;top:8px" width="12" height="7" viewBox="0 0 12 7"><path d="M.5 3.500 H11.500 M3.500 .5 L.5 3.500 L3.500 6.500" stroke="#333" stroke-width="1" fill="none"/></svg>
<svg class="abs" style="left:28px;top:4px" width="14" height="14" viewBox="0 0 14 14"><rect x="6" y=".5" width="7" height="12" fill="#d0d0d0" stroke="#777" stroke-width=".8"/><rect x=".5" y="3" width="9" height="7" fill="#4a7fd0" stroke="#ddd" stroke-width="1"/><rect x="3" y="11" width="4" height="1.500" fill="#ccc"/></svg>
<div class="abs" id="bc1" style="left:44px;top:3px;font-size:11.800px;line-height:16px;color:#fff;white-space:nowrap;text-shadow:1px 1px 0 #333">Server: 127.0.0.1 »</div>
<svg class="abs" style="left:147px;top:5px" width="11" height="13" viewBox="0 0 11 13"><path d="M.5 2.500 V10.500 C.5 12 3.500 12.500 5.500 12.500 C7.500 12.500 10.500 12 10.500 10.500 V2.500" fill="#e8e8e8" stroke="#bbb" stroke-width=".8"/><ellipse cx="5.500" cy="2.500" rx="5" ry="2" fill="#fafafa" stroke="#bbb" stroke-width=".8"/></svg>
<div class="abs" id="bc2" style="left:161px;top:3px;font-size:11.800px;line-height:16px;color:#fff;white-space:nowrap;text-shadow:1px 1px 0 #333">Database: dishubsimpel »</div>
<svg class="abs" style="left:300px;top:5px" width="13" height="13" viewBox="0 0 13 13"><rect x=".5" y=".5" width="11" height="10" fill="#fff" stroke="#99b" stroke-width=".9"/><rect x=".5" y=".5" width="11" height="3" fill="#aabfe0"/><path d="M.5 6.500 H11.500 M4 3.500 V10.500 M8 3.500 V10.500" stroke="#bcd"/><circle cx="10" cy="10" r="2.500" fill="#bbb" stroke="#888" stroke-width=".6"/></svg>
<div class="abs" id="bc3" style="left:316px;top:3px;font-size:11.800px;line-height:16px;color:#fff;white-space:nowrap;text-shadow:1px 1px 0 #333">Table: size</div>
<div class="abs" style="left:0;top:22px;width:544px;height:30px;background:#fff"></div>
<div class="abs" style="left:0px;top:22px;width:85px;height:30px;background:#fff;border-right:1px solid #d0d0d0;"></div>
<svg class="abs" style="left:11px;top:30px" width="14" height="14" viewBox="0 0 14 14"><rect x=".5" y=".5" width="12" height="12" fill="#fff" stroke="#7a9fd0"/><rect x=".5" y=".5" width="12" height="3" fill="#b7cdea"/><path d="M.5 6.500 H12.500 M.5 9.500 H12.500 M4.500 3.500 V12.500 M8.500 3.500 V12.500" stroke="#c5d6ec"/></svg>
<div class="abs" style="left:34px;top:28px;font-size:11.800px;line-height:16px;font-weight:bold;color:#235a81;white-space:nowrap">Browse</div>
<div class="abs" style="left:85px;top:22px;width:94px;height:30px;background:linear-gradient(#fdfdfd,#e6e6e6);border-right:1px solid #d0d0d0;border-bottom:1px solid #d0d0d0;"></div>
<svg class="abs" style="left:97px;top:30px" width="14" height="14" viewBox="0 0 14 14"><rect x=".5" y="1.500" width="12" height="11" fill="#eef3fa" stroke="#a5bfe0"/><path d="M3.500 1.500 V12.500 M9.500 1.500 V12.500" stroke="#a5bfe0"/><path d="M2.500 9 L5.500 6 L7 8 L11 3" stroke="#3f9a3f" stroke-width="2" fill="none"/></svg>
<div class="abs" style="left:120px;top:28px;font-size:11.800px;line-height:16px;font-weight:bold;color:#235a81;white-space:nowrap">Structure</div>
<div class="abs" style="left:179px;top:22px;width:67px;height:30px;background:linear-gradient(#fdfdfd,#e6e6e6);border-right:1px solid #d0d0d0;border-bottom:1px solid #d0d0d0;"></div>
<svg class="abs" style="left:192px;top:30px" width="14" height="14" viewBox="0 0 14 14"><path d="M3 1 H12 C11 4 11 8 10.500 12 H1.500 C2.500 8 2.500 4 3 1 Z" fill="#dbe7f7" stroke="#7fa3d6" stroke-width=".9"/><path d="M1 12 H10.500 V13 H1Z" fill="#7fa3d6"/></svg>
<div class="abs" style="left:215px;top:28px;font-size:11.800px;line-height:16px;font-weight:bold;color:#235a81;white-space:nowrap">SQL</div>
<div class="abs" style="left:246px;top:22px;width:83px;height:30px;background:linear-gradient(#fdfdfd,#e6e6e6);border-right:1px solid #d0d0d0;border-bottom:1px solid #d0d0d0;"></div>
<svg class="abs" style="left:259px;top:30px" width="14" height="14" viewBox="0 0 14 14"><circle cx="5" cy="5" r="4" fill="#dbeafb" stroke="#a9c3e6" stroke-width="1.200"/><path d="M8 8 L12 12" stroke="#c98b3c" stroke-width="2.200"/></svg>
<div class="abs" style="left:282px;top:28px;font-size:11.800px;line-height:16px;font-weight:bold;color:#235a81;white-space:nowrap">Search</div>
<div class="abs" style="left:329px;top:22px;width:75px;height:30px;background:linear-gradient(#fdfdfd,#e6e6e6);border-right:1px solid #d0d0d0;border-bottom:1px solid #d0d0d0;"></div>
<svg class="abs" style="left:341px;top:30px" width="14" height="14" viewBox="0 0 14 14"><rect x="0" y="1" width="5" height="12" fill="#d0d0d0"/><path d="M0 .6 H5 M0 13.400 H5 M0 4 H2 M0 7 H2 M0 10 H2" stroke="#333" stroke-width="1.200"/><path d="M9.500 7 H3.500 M6.500 4 L3 7 L6.500 10 Z" stroke="#5a52d0" stroke-width="1.700" fill="#5a52d0" stroke-linejoin="round"/><path d="M11.500 .5 V3.500 M10 2 H13" stroke="#5a52d0" stroke-width="1"/><rect x="10" y="5.500" width="3.500" height="1.600" fill="#f0c020"/><rect x="10" y="7.500" width="3.500" height="1.300" fill="#333"/></svg>
<div class="abs" style="left:364px;top:28px;font-size:11.800px;line-height:16px;font-weight:bold;color:#235a81;white-space:nowrap">Insert</div>
<div class="abs" style="left:404px;top:22px;width:82px;height:30px;background:linear-gradient(#fdfdfd,#e6e6e6);border-right:1px solid #d0d0d0;border-bottom:1px solid #d0d0d0;"></div>
<svg class="abs" style="left:416px;top:30px" width="14" height="14" viewBox="0 0 14 14"><rect x=".5" y=".5" width="11" height="10" fill="#fff" stroke="#7a9fd0"/><rect x=".5" y=".5" width="11" height="3" fill="#b7cdea"/><path d="M.5 6.500 H11.500" stroke="#c5d6ec"/><path d="M5 10 H11 M9 7.500 L12.500 10 L9 12.500" stroke="#3f9a3f" stroke-width="1.800" fill="none"/></svg>
<div class="abs" style="left:439px;top:28px;font-size:11.800px;line-height:16px;font-weight:bold;color:#235a81;white-space:nowrap">Export</div>
<div class="abs" style="left:486px;top:22px;width:85px;height:30px;background:linear-gradient(#fdfdfd,#e6e6e6);border-right:1px solid #d0d0d0;border-bottom:1px solid #d0d0d0;"></div>
<svg class="abs" style="left:496px;top:30px" width="14" height="14" viewBox="0 0 14 14"><rect x=".5" y=".5" width="11" height="10" fill="#fff" stroke="#7a9fd0"/><rect x=".5" y=".5" width="11" height="3" fill="#b7cdea"/><path d="M.5 6.500 H11.500" stroke="#c5d6ec"/><path d="M13 10 H6 M8.500 7.500 L5 10 L8.500 12.500" stroke="#d9534f" stroke-width="1.800" fill="none"/></svg>
<div class="abs" style="left:519px;top:28px;font-size:11.800px;line-height:16px;font-weight:bold;color:#235a81;white-space:nowrap">Import</div>
<div class="abs" style="left:3px;top:56px;width:545px;height:30px;background:#e5e5e5"></div>
<div class="abs" style="left:3px;top:86px;width:545px;height:19px;background:#d3dce3;border-radius:0 0 0 4px"></div>
<div class="abs" id="sql" style="left:12px;top:65px;font-family:'Liberation Mono',monospace;font-size:9.600px;letter-spacing:-0.49px;line-height:12px;white-space:pre;color:#333"><span style="color:#708;border-bottom:1px dotted #000">UPDATE</span> <span style="color:#05a">`size`</span> <span style="color:#708;border-bottom:1px dotted #000">SET</span> <span style="color:#05a">`subcat_id`</span> = <span style="color:#a11">'3'</span> <span style="color:#708">WHERE</span> <span style="color:#05a">`size`</span>.<span style="color:#05a">`size_id`</span> = <span style="color:#164">14</span>;</div>
<div class="abs" style="left:30px;top:126px;width:10px;height:10px;border:1px solid #b0b0b0;border-radius:2px;background:linear-gradient(#f8f8f8,#e4e4e4)"></div>
<div class="abs" style="left:50px;top:123px;font-size:11.800px;line-height:16px;color:#444;white-space:nowrap">Show all</div>
<div class="abs" style="left:106px;top:119px;width:1px;height:20px;background:#999"></div>
<div class="abs" style="left:117px;top:123px;font-size:11.800px;line-height:16px;color:#444;white-space:nowrap">Number of rows:</div>
<div class="abs" style="left:213px;top:120px;width:47px;height:21px;border:1px solid #aaa;border-radius:2px;background:#fff;font-size:11.800px;line-height:19px;color:#444;padding-left:6px">25</div>
<svg class="abs" style="left:247px;top:127px" width="7" height="6" viewBox="0 0 7 6"><path d="M0 0 H7 L3.500 6Z" fill="#222"/></svg>
<div class="abs" style="left:292px;top:123px;font-size:11.800px;line-height:16px;color:#444;white-space:nowrap">Filter rows:</div>
<div class="abs" style="left:355px;top:119px;width:154px;height:23px;border:1px solid #aaa;border-radius:2px;background:#fff;font-size:11.800px;line-height:21px;color:#777;padding-left:4px;white-space:nowrap">Search this table</div>
<div class="abs" style="left:515px;top:123px;font-size:11.800px;line-height:16px;color:#444;white-space:nowrap">Sort by key:</div>
<div class="abs" style="left:3px;top:156px;font-size:11.800px;line-height:16px;color:#235a81;white-space:nowrap">+ Options</div>
<div class="abs" style="left:3px;top:171px;width:186px;height:19px;background:linear-gradient(#fff,#cfcfcf)"></div>
<div class="abs" style="left:191px;top:171px;width:54px;height:19px;background:linear-gradient(#fff,#cfcfcf)"></div>
<div class="abs" style="left:195px;top:173px;font-size:11.800px;line-height:16px;font-weight:bold;color:#235a81;white-space:nowrap">size_id</div>
<div class="abs" style="left:247px;top:171px;width:76px;height:19px;background:linear-gradient(#fff,#cfcfcf)"></div>
<div class="abs" style="left:251px;top:173px;font-size:11.800px;line-height:16px;font-weight:bold;color:#235a81;white-space:nowrap">size_name</div>
<div class="abs" style="left:324px;top:171px;width:79px;height:19px;background:linear-gradient(#fff,#cfcfcf)"></div>
<div class="abs" style="left:328px;top:173px;font-size:11.800px;line-height:16px;font-weight:bold;color:#235a81;white-space:nowrap">size_status</div>
<div class="abs" style="left:405px;top:171px;width:71px;height:19px;background:linear-gradient(#fff,#cfcfcf)"></div>
<div class="abs" style="left:410px;top:173px;font-size:11.800px;line-height:16px;font-weight:bold;color:#235a81;white-space:nowrap">subcat_id</div>
<svg class="abs" style="left:7px;top:173px" width="43" height="16" viewBox="0 0 43 16"><path d="M1 7.500 H12 M4.500 4.500 L1.500 7.500 L4.500 10.500" stroke="#5a78c8" stroke-width="1.200" fill="none"/><path d="M13.500 2 H27.500 M20.500 2 V15" stroke="#5a78c8" stroke-width="1.600" fill="none"/><path d="M29 7.500 H41 M38 4.500 L41 7.500 L38 10.500" stroke="#5a78c8" stroke-width="1.200" fill="none"/></svg>
<svg class="abs" style="left:172px;top:178px" width="11" height="6" viewBox="0 0 11 6"><path d="M0 0 H11 L5.500 6Z" fill="#444"/><path d="M2 1 H9 L5.500 4.800Z" fill="#777"/></svg>
<div class="abs" style="left:12px;top:196px;width:11px;height:11px;border:1px solid #b0b0b0;border-radius:2px;background:linear-gradient(#f8f8f8,#e4e4e4)"></div>
<svg class="abs" style="left:37px;top:195px" width="14" height="14" viewBox="0 0 14 14"><path d="M1 13 L2 9.500 L10 1.500 C11 .5 13.500 3 12.500 4 L4.500 12 Z" fill="#f2b53a" stroke="#b07a18" stroke-width=".9"/><path d="M1 13 L2 9.500 L4.500 12Z" fill="#f6d9a0" stroke="#8a5a10" stroke-width=".6"/><path d="M9.500 2 L12 4.500" stroke="#d88" stroke-width="1.500"/></svg>
<div class="abs" style="left:54px;top:193px;font-size:11.800px;line-height:16px;color:#235a81;white-space:nowrap">Edit</div>
<svg class="abs" style="left:83px;top:195.5px" width="14" height="16" viewBox="0 0 14 16"><rect x="0" y="1" width="5" height="13" fill="#d0d0d0"/><path d="M0 .6 H5 M0 14.400 H5 M0 4.500 H2 M0 7.500 H2 M0 10.500 H2" stroke="#333" stroke-width="1.200"/><path d="M9.500 7.500 H3.500 M6.500 4.500 L3 7.500 L6.500 10.500 Z" stroke="#5a52d0" stroke-width="1.700" fill="#5a52d0" stroke-linejoin="round"/><path d="M11 1 V4 M9.500 2.500 H12.500" stroke="#5a52d0" stroke-width="1"/><rect x="9.500" y="6" width="3.200" height="1.600" fill="#f0c020"/><rect x="9.500" y="8" width="3.200" height="1.300" fill="#333"/></svg>
<div class="abs" style="left:100px;top:193px;font-size:11.800px;line-height:16px;color:#235a81;white-space:nowrap">Copy</div>
<svg class="abs" style="left:136px;top:196px" width="13" height="13" viewBox="0 0 13 13"><circle cx="6.500" cy="6.500" r="6" fill="#e8524a" stroke="#c0392b" stroke-width=".8"/><ellipse cx="6.500" cy="4" rx="4.500" ry="2.500" fill="#f08a80" opacity=".7"/><rect x="3" y="5.500" width="7" height="2.200" fill="#fff" rx=".5"/></svg>
<div class="abs" style="left:153px;top:193px;font-size:11.800px;line-height:16px;color:#235a81;white-space:nowrap">Delete</div>
<div class="abs" style="left:191px;top:194px;width:43px;text-align:right;font-size:11.800px;line-height:16px;color:#444;white-space:nowrap">1</div>
<div class="abs" style="left:250px;top:194px;font-size:11.800px;line-height:16px;color:#444;white-space:nowrap">P. Bun</div>
<div class="abs" style="left:327px;top:194px;font-size:11.800px;line-height:16px;color:#444;white-space:nowrap">ACTIVE</div>
<div class="abs" style="left:406px;top:194px;width:58px;text-align:right;font-size:11.800px;line-height:16px;color:#444;white-space:nowrap;font-style:italic;color:#888;">NULL</div>
<div class="abs" style="left:3px;top:214px;width:473px;height:24px;background:#dfdfdf"></div>
<div class="abs" style="left:12px;top:220px;width:11px;height:11px;border:1px solid #b0b0b0;border-radius:2px;background:linear-gradient(#f8f8f8,#e4e4e4)"></div>
<svg class="abs" style="left:37px;top:219px" width="14" height="14" viewBox="0 0 14 14"><path d="M1 13 L2 9.500 L10 1.500 C11 .5 13.500 3 12.500 4 L4.500 12 Z" fill="#f2b53a" stroke="#b07a18" stroke-width=".9"/><path d="M1 13 L2 9.500 L4.500 12Z" fill="#f6d9a0" stroke="#8a5a10" stroke-width=".6"/><path d="M9.500 2 L12 4.500" stroke="#d88" stroke-width="1.500"/></svg>
<div class="abs" style="left:54px;top:217px;font-size:11.800px;line-height:16px;color:#235a81;white-space:nowrap">Edit</div>
<svg class="abs" style="left:83px;top:219.5px" width="14" height="16" viewBox="0 0 14 16"><rect x="0" y="1" width="5" height="13" fill="#d0d0d0"/><path d="M0 .6 H5 M0 14.400 H5 M0 4.500 H2 M0 7.500 H2 M0 10.500 H2" stroke="#333" stroke-width="1.200"/><path d="M9.500 7.500 H3.500 M6.500 4.500 L3 7.500 L6.500 10.500 Z" stroke="#5a52d0" stroke-width="1.700" fill="#5a52d0" stroke-linejoin="round"/><path d="M11 1 V4 M9.500 2.500 H12.500" stroke="#5a52d0" stroke-width="1"/><rect x="9.500" y="6" width="3.200" height="1.600" fill="#f0c020"/><rect x="9.500" y="8" width="3.200" height="1.300" fill="#333"/></svg>
<div class="abs" style="left:100px;top:217px;font-size:11.800px;line-height:16px;color:#235a81;white-space:nowrap">Copy</div>
<svg class="abs" style="left:136px;top:220px" width="13" height="13" viewBox="0 0 13 13"><circle cx="6.500" cy="6.500" r="6" fill="#e8524a" stroke="#c0392b" stroke-width=".8"/><ellipse cx="6.500" cy="4" rx="4.500" ry="2.500" fill="#f08a80" opacity=".7"/><rect x="3" y="5.500" width="7" height="2.200" fill="#fff" rx=".5"/></svg>
<div class="abs" style="left:153px;top:217px;font-size:11.800px;line-height:16px;color:#235a81;white-space:nowrap">Delete</div>
<div class="abs" style="left:191px;top:218px;width:43px;text-align:right;font-size:11.800px;line-height:16px;color:#444;white-space:nowrap">2</div>
<div class="abs" style="left:250px;top:218px;font-size:11.800px;line-height:16px;color:#444;white-space:nowrap">Banjarmsn</div>
<div class="abs" style="left:327px;top:218px;font-size:11.800px;line-height:16px;color:#444;white-space:nowrap">ACTIVE</div>
<div class="abs" style="left:406px;top:218px;width:58px;text-align:right;font-size:11.800px;line-height:16px;color:#444;white-space:nowrap;font-style:italic;color:#888;">NULL</div>
<div class="abs" style="left:12px;top:244px;width:11px;height:11px;border:1px solid #b0b0b0;border-radius:2px;background:linear-gradient(#f8f8f8,#e4e4e4)"></div>
<svg class="abs" style="left:37px;top:243px" width="14" height="14" viewBox="0 0 14 14"><path d="M1 13 L2 9.500 L10 1.500 C11 .5 13.500 3 12.500 4 L4.500 12 Z" fill="#f2b53a" stroke="#b07a18" stroke-width=".9"/><path d="M1 13 L2 9.500 L4.500 12Z" fill="#f6d9a0" stroke="#8a5a10" stroke-width=".6"/><path d="M9.500 2 L12 4.500" stroke="#d88" stroke-width="1.500"/></svg>
<div class="abs" style="left:54px;top:241px;font-size:11.800px;line-height:16px;color:#235a81;white-space:nowrap">Edit</div>
<svg class="abs" style="left:83px;top:243.5px" width="14" height="16" viewBox="0 0 14 16"><rect x="0" y="1" width="5" height="13" fill="#d0d0d0"/><path d="M0 .6 H5 M0 14.400 H5 M0 4.500 H2 M0 7.500 H2 M0 10.500 H2" stroke="#333" stroke-width="1.200"/><path d="M9.500 7.500 H3.500 M6.500 4.500 L3 7.500 L6.500 10.500 Z" stroke="#5a52d0" stroke-width="1.700" fill="#5a52d0" stroke-linejoin="round"/><path d="M11 1 V4 M9.500 2.500 H12.500" stroke="#5a52d0" stroke-width="1"/><rect x="9.500" y="6" width="3.200" height="1.600" fill="#f0c020"/><rect x="9.500" y="8" width="3.200" height="1.300" fill="#333"/></svg>
<div class="abs" style="left:100px;top:241px;font-size:11.800px;line-height:16px;color:#235a81;white-space:nowrap">Copy</div>
<svg class="abs" style="left:136px;top:244px" width="13" height="13" viewBox="0 0 13 13"><circle cx="6.500" cy="6.500" r="6" fill="#e8524a" stroke="#c0392b" stroke-width=".8"/><ellipse cx="6.500" cy="4" rx="4.500" ry="2.500" fill="#f08a80" opacity=".7"/><rect x="3" y="5.500" width="7" height="2.200" fill="#fff" rx=".5"/></svg>
<div class="abs" style="left:153px;top:241px;font-size:11.800px;line-height:16px;color:#235a81;white-space:nowrap">Delete</div>
<div class="abs" style="left:191px;top:242px;width:43px;text-align:right;font-size:11.800px;line-height:16px;color:#444;white-space:nowrap">3</div>
<div class="abs" style="left:250px;top:242px;font-size:11.800px;line-height:16px;color:#444;white-space:nowrap">P. raya</div>
<div class="abs" style="left:327px;top:242px;font-size:11.800px;line-height:16px;color:#444;white-space:nowrap">ACTIVE</div>
<div class="abs" style="left:406px;top:242px;width:58px;text-align:right;font-size:11.800px;line-height:16px;color:#444;white-space:nowrap;font-style:italic;color:#888;">NULL</div>
<div class="abs" style="left:3px;top:262px;width:473px;height:24px;background:#dfdfdf"></div>
<div class="abs" style="left:12px;top:268px;width:11px;height:11px;border:1px solid #b0b0b0;border-radius:2px;background:linear-gradient(#f8f8f8,#e4e4e4)"></div>
<svg class="abs" style="left:37px;top:267px" width="14" height="14" viewBox="0 0 14 14"><path d="M1 13 L2 9.500 L10 1.500 C11 .5 13.500 3 12.500 4 L4.500 12 Z" fill="#f2b53a" stroke="#b07a18" stroke-width=".9"/><path d="M1 13 L2 9.500 L4.500 12Z" fill="#f6d9a0" stroke="#8a5a10" stroke-width=".6"/><path d="M9.500 2 L12 4.500" stroke="#d88" stroke-width="1.500"/></svg>
<div class="abs" style="left:54px;top:265px;font-size:11.800px;line-height:16px;color:#235a81;white-space:nowrap">Edit</div>
<svg class="abs" style="left:83px;top:267.5px" width="14" height="16" viewBox="0 0 14 16"><rect x="0" y="1" width="5" height="13" fill="#d0d0d0"/><path d="M0 .6 H5 M0 14.400 H5 M0 4.500 H2 M0 7.500 H2 M0 10.500 H2" stroke="#333" stroke-width="1.200"/><path d="M9.500 7.500 H3.500 M6.500 4.500 L3 7.500 L6.500 10.500 Z" stroke="#5a52d0" stroke-width="1.700" fill="#5a52d0" stroke-linejoin="round"/><path d="M11 1 V4 M9.500 2.500 H12.500" stroke="#5a52d0" stroke-width="1"/><rect x="9.500" y="6" width="3.200" height="1.600" fill="#f0c020"/><rect x="9.500" y="8" width="3.200" height="1.300" fill="#333"/></svg>
<div class="abs" style="left:100px;top:265px;font-size:11.800px;line-height:16px;color:#235a81;white-space:nowrap">Copy</div>
<svg class="abs" style="left:136px;top:268px" width="13" height="13" viewBox="0 0 13 13"><circle cx="6.500" cy="6.500" r="6" fill="#e8524a" stroke="#c0392b" stroke-width=".8"/><ellipse cx="6.500" cy="4" rx="4.500" ry="2.500" fill="#f08a80" opacity=".7"/><rect x="3" y="5.500" width="7" height="2.200" fill="#fff" rx=".5"/></svg>
<div class="abs" style="left:153px;top:265px;font-size:11.800px;line-height:16px;color:#235a81;white-space:nowrap">Delete</div>
<div class="abs" style="left:191px;top:266px;width:43px;text-align:right;font-size:11.800px;line-height:16px;color:#444;white-space:nowrap">4</div>
<div class="abs" style="left:250px;top:266px;font-size:11.800px;line-height:16px;color:#444;white-space:nowrap">Kota Besi</div>
<div class="abs" style="left:327px;top:266px;font-size:11.800px;line-height:16px;color:#444;white-space:nowrap">ACTIVE</div>
<div class="abs" style="left:406px;top:266px;width:58px;text-align:right;font-size:11.800px;line-height:16px;color:#444;white-space:nowrap;">6</div>
<div class="abs" style="left:12px;top:292px;width:11px;height:11px;border:1px solid #b0b0b0;border-radius:2px;background:linear-gradient(#f8f8f8,#e4e4e4)"></div>
<svg class="abs" style="left:37px;top:291px" width="14" height="14" viewBox="0 0 14 14"><path d="M1 13 L2 9.500 L10 1.500 C11 .5 13.500 3 12.500 4 L4.500 12 Z" fill="#f2b53a" stroke="#b07a18" stroke-width=".9"/><path d="M1 13 L2 9.500 L4.500 12Z" fill="#f6d9a0" stroke="#8a5a10" stroke-width=".6"/><path d="M9.500 2 L12 4.500" stroke="#d88" stroke-width="1.500"/></svg>
<div class="abs" style="left:54px;top:289px;font-size:11.800px;line-height:16px;color:#235a81;white-space:nowrap">Edit</div>
<svg class="abs" style="left:83px;top:291.5px" width="14" height="16" viewBox="0 0 14 16"><rect x="0" y="1" width="5" height="13" fill="#d0d0d0"/><path d="M0 .6 H5 M0 14.400 H5 M0 4.500 H2 M0 7.500 H2 M0 10.500 H2" stroke="#333" stroke-width="1.200"/><path d="M9.500 7.500 H3.500 M6.500 4.500 L3 7.500 L6.500 10.500 Z" stroke="#5a52d0" stroke-width="1.700" fill="#5a52d0" stroke-linejoin="round"/><path d="M11 1 V4 M9.500 2.500 H12.500" stroke="#5a52d0" stroke-width="1"/><rect x="9.500" y="6" width="3.200" height="1.600" fill="#f0c020"/><rect x="9.500" y="8" width="3.200" height="1.300" fill="#333"/></svg>
<div class="abs" style="left:100px;top:289px;font-size:11.800px;line-height:16px;color:#235a81;white-space:nowrap">Copy</div>
<svg class="abs" style="left:136px;top:292px" width="13" height="13" viewBox="0 0 13 13"><circle cx="6.500" cy="6.500" r="6" fill="#e8524a" stroke="#c0392b" stroke-width=".8"/><ellipse cx="6.500" cy="4" rx="4.500" ry="2.500" fill="#f08a80" opacity=".7"/><rect x="3" y="5.500" width="7" height="2.200" fill="#fff" rx=".5"/></svg>
<div class="abs" style="left:153px;top:289px;font-size:11.800px;line-height:16px;color:#235a81;white-space:nowrap">Delete</div>
<div class="abs" style="left:191px;top:290px;width:43px;text-align:right;font-size:11.800px;line-height:16px;color:#444;white-space:nowrap">5</div>
<div class="abs" style="left:250px;top:290px;font-size:11.800px;line-height:16px;color:#444;white-space:nowrap">Samuda</div>
<div class="abs" style="left:327px;top:290px;font-size:11.800px;line-height:16px;color:#444;white-space:nowrap">ACTIVE</div>
<div class="abs" style="left:406px;top:290px;width:58px;text-align:right;font-size:11.800px;line-height:16px;color:#444;white-space:nowrap;">6</div>
<div class="abs" style="left:3px;top:310px;width:473px;height:24px;background:#dfdfdf"></div>
<div class="abs" style="left:12px;top:316px;width:11px;height:11px;border:1px solid #b0b0b0;border-radius:2px;background:linear-gradient(#f8f8f8,#e4e4e4)"></div>
<svg class="abs" style="left:37px;top:315px" width="14" height="14" viewBox="0 0 14 14"><path d="M1 13 L2 9.500 L10 1.500 C11 .5 13.500 3 12.500 4 L4.500 12 Z" fill="#f2b53a" stroke="#b07a18" stroke-width=".9"/><path d="M1 13 L2 9.500 L4.500 12Z" fill="#f6d9a0" stroke="#8a5a10" stroke-width=".6"/><path d="M9.500 2 L12 4.500" stroke="#d88" stroke-width="1.500"/></svg>
<div class="abs" style="left:54px;top:313px;font-size:11.800px;line-height:16px;color:#235a81;white-space:nowrap">Edit</div>
<svg class="abs" style="left:83px;top:315.5px" width="14" height="16" viewBox="0 0 14 16"><rect x="0" y="1" width="5" height="13" fill="#d0d0d0"/><path d="M0 .6 H5 M0 14.400 H5 M0 4.500 H2 M0 7.500 H2 M0 10.500 H2" stroke="#333" stroke-width="1.200"/><path d="M9.500 7.500 H3.500 M6.500 4.500 L3 7.500 L6.500 10.500 Z" stroke="#5a52d0" stroke-width="1.700" fill="#5a52d0" stroke-linejoin="round"/><path d="M11 1 V4 M9.500 2.500 H12.500" stroke="#5a52d0" stroke-width="1"/><rect x="9.500" y="6" width="3.200" height="1.600" fill="#f0c020"/><rect x="9.500" y="8" width="3.200" height="1.300" fill="#333"/></svg>
<div class="abs" style="left:100px;top:313px;font-size:11.800px;line-height:16px;color:#235a81;white-space:nowrap">Copy</div>
<svg class="abs" style="left:136px;top:316px" width="13" height="13" viewBox="0 0 13 13"><circle cx="6.500" cy="6.500" r="6" fill="#e8524a" stroke="#c0392b" stroke-width=".8"/><ellipse cx="6.500" cy="4" rx="4.500" ry="2.500" fill="#f08a80" opacity=".7"/><rect x="3" y="5.500" width="7" height="2.200" fill="#fff" rx=".5"/></svg>
<div class="abs" style="left:153px;top:313px;font-size:11.800px;line-height:16px;color:#235a81;white-space:nowrap">Delete</div>
<div class="abs" style="left:191px;top:314px;width:43px;text-align:right;font-size:11.800px;line-height:16px;color:#444;white-space:nowrap">6</div>
<div class="abs" style="left:250px;top:314px;font-size:11.800px;line-height:16px;color:#444;white-space:nowrap">Ds. Hanaut</div>
<div class="abs" style="left:327px;top:314px;font-size:11.800px;line-height:16px;color:#444;white-space:nowrap">ACTIVE</div>
<div class="abs" style="left:406px;top:314px;width:58px;text-align:right;font-size:11.800px;line-height:16px;color:#444;white-space:nowrap;font-style:italic;color:#888;">NULL</div>
<div class="abs" style="left:12px;top:340px;width:11px;height:11px;border:1px solid #b0b0b0;border-radius:2px;background:linear-gradient(#f8f8f8,#e4e4e4)"></div>
<svg class="abs" style="left:37px;top:339px" width="14" height="14" viewBox="0 0 14 14"><path d="M1 13 L2 9.500 L10 1.500 C11 .5 13.500 3 12.500 4 L4.500 12 Z" fill="#f2b53a" stroke="#b07a18" stroke-width=".9"/><path d="M1 13 L2 9.500 L4.500 12Z" fill="#f6d9a0" stroke="#8a5a10" stroke-width=".6"/><path d="M9.500 2 L12 4.500" stroke="#d88" stroke-width="1.500"/></svg>
<div class="abs" style="left:54px;top:337px;font-size:11.800px;line-height:16px;color:#235a81;white-space:nowrap">Edit</div>
<svg class="abs" style="left:83px;top:339.5px" width="14" height="16" viewBox="0 0 14 16"><rect x="0" y="1" width="5" height="13" fill="#d0d0d0"/><path d="M0 .6 H5 M0 14.400 H5 M0 4.500 H2 M0 7.500 H2 M0 10.500 H2" stroke="#333" stroke-width="1.200"/><path d="M9.500 7.500 H3.500 M6.500 4.500 L3 7.500 L6.500 10.500 Z" stroke="#5a52d0" stroke-width="1.700" fill="#5a52d0" stroke-linejoin="round"/><path d="M11 1 V4 M9.500 2.500 H12.500" stroke="#5a52d0" stroke-width="1"/><rect x="9.500" y="6" width="3.200" height="1.600" fill="#f0c020"/><rect x="9.500" y="8" width="3.200" height="1.300" fill="#333"/></svg>
<div class="abs" style="left:100px;top:337px;font-size:11.800px;line-height:16px;color:#235a81;white-space:nowrap">Copy</div>
<svg class="abs" style="left:136px;top:340px" width="13" height="13" viewBox="0 0 13 13"><circle cx="6.500" cy="6.500" r="6" fill="#e8524a" stroke="#c0392b" stroke-width=".8"/><ellipse cx="6.500" cy="4" rx="4.500" ry="2.500" fill="#f08a80" opacity=".7"/><rect x="3" y="5.500" width="7" height="2.200" fill="#fff" rx=".5"/></svg>
<div class="abs" style="left:153px;top:337px;font-size:11.800px;line-height:16px;color:#235a81;white-space:nowrap">Delete</div>
<div class="abs" style="left:191px;top:338px;width:43px;text-align:right;font-size:11.800px;line-height:16px;color:#444;white-space:nowrap">7</div>
<div class="abs" style="left:250px;top:338px;font-size:11.800px;line-height:16px;color:#444;white-space:nowrap">Ds.BpgHulu</div>
<div class="abs" style="left:327px;top:338px;font-size:11.800px;line-height:16px;color:#444;white-space:nowrap">ACTIVE</div>
<div class="abs" style="left:406px;top:338px;width:58px;text-align:right;font-size:11.800px;line-height:16px;color:#444;white-space:nowrap;font-style:italic;color:#888;">NULL</div>
<div class="abs" style="left:3px;top:358px;width:473px;height:24px;background:#dfdfdf"></div>
<div class="abs" style="left:12px;top:364px;width:11px;height:11px;border:1px solid #b0b0b0;border-radius:2px;background:linear-gradient(#f8f8f8,#e4e4e4)"></div>
<svg class="abs" style="left:37px;top:363px" width="14" height="14" viewBox="0 0 14 14"><path d="M1 13 L2 9.500 L10 1.500 C11 .5 13.500 3 12.500 4 L4.500 12 Z" fill="#f2b53a" stroke="#b07a18" stroke-width=".9"/><path d="M1 13 L2 9.500 L4.500 12Z" fill="#f6d9a0" stroke="#8a5a10" stroke-width=".6"/><path d="M9.500 2 L12 4.500" stroke="#d88" stroke-width="1.500"/></svg>
<div class="abs" style="left:54px;top:361px;font-size:11.800px;line-height:16px;color:#235a81;white-space:nowrap">Edit</div>
<svg class="abs" style="left:83px;top:363.5px" width="14" height="16" viewBox="0 0 14 16"><rect x="0" y="1" width="5" height="13" fill="#d0d0d0"/><path d="M0 .6 H5 M0 14.400 H5 M0 4.500 H2 M0 7.500 H2 M0 10.500 H2" stroke="#333" stroke-width="1.200"/><path d="M9.500 7.500 H3.500 M6.500 4.500 L3 7.500 L6.500 10.500 Z" stroke="#5a52d0" stroke-width="1.700" fill="#5a52d0" stroke-linejoin="round"/><path d="M11 1 V4 M9.500 2.500 H12.500" stroke="#5a52d0" stroke-width="1"/><rect x="9.500" y="6" width="3.200" height="1.600" fill="#f0c020"/><rect x="9.500" y="8" width="3.200" height="1.300" fill="#333"/></svg>
<div class="abs" style="left:100px;top:361px;font-size:11.800px;line-height:16px;color:#235a81;white-space:nowrap">Copy</div>
<svg class="abs" style="left:136px;top:364px" width="13" height="13" viewBox="0 0 13 13"><circle cx="6.500" cy="6.500" r="6" fill="#e8524a" stroke="#c0392b" stroke-width=".8"/><ellipse cx="6.500" cy="4" rx="4.500" ry="2.500" fill="#f08a80" opacity=".7"/><rect x="3" y="5.500" width="7" height="2.200" fill="#fff" rx=".5"/></svg>
<div class="abs" style="left:153px;top:361px;font-size:11.800px;line-height:16px;color:#235a81;white-space:nowrap">Delete</div>
<div class="abs" style="left:191px;top:362px;width:43px;text-align:right;font-size:11.800px;line-height:16px;color:#444;white-space:nowrap">8</div>
<div class="abs" style="left:250px;top:362px;font-size:11.800px;line-height:16px;color:#444;white-space:nowrap">Ds.Bebaung</div>
<div class="abs" style="left:327px;top:362px;font-size:11.800px;line-height:16px;color:#444;white-space:nowrap">ACTIVE</div>
<div class="abs" style="left:406px;top:362px;width:58px;text-align:right;font-size:11.800px;line-height:16px;color:#444;white-space:nowrap;">10</div>
<div class="abs" style="left:12px;top:388px;width:11px;height:11px;border:1px solid #b0b0b0;border-radius:2px;background:linear-gradient(#f8f8f8,#e4e4e4)"></div>
<svg class="abs" style="left:37px;top:387px" width="14" height="14" viewBox="0 0 14 14"><path d="M1 13 L2 9.500 L10 1.500 C11 .5 13.500 3 12.500 4 L4.500 12 Z" fill="#f2b53a" stroke="#b07a18" stroke-width=".9"/><path d="M1 13 L2 9.500 L4.500 12Z" fill="#f6d9a0" stroke="#8a5a10" stroke-width=".6"/><path d="M9.500 2 L12 4.500" stroke="#d88" stroke-width="1.500"/></svg>
<div class="abs" style="left:54px;top:385px;font-size:11.800px;line-height:16px;color:#235a81;white-space:nowrap">Edit</div>
<svg class="abs" style="left:83px;top:387.5px" width="14" height="16" viewBox="0 0 14 16"><rect x="0" y="1" width="5" height="13" fill="#d0d0d0"/><path d="M0 .6 H5 M0 14.400 H5 M0 4.500 H2 M0 7.500 H2 M0 10.500 H2" stroke="#333" stroke-width="1.200"/><path d="M9.500 7.500 H3.500 M6.500 4.500 L3 7.500 L6.500 10.500 Z" stroke="#5a52d0" stroke-width="1.700" fill="#5a52d0" stroke-linejoin="round"/><path d="M11 1 V4 M9.500 2.500 H12.500" stroke="#5a52d0" stroke-width="1"/><rect x="9.500" y="6" width="3.200" height="1.600" fill="#f0c020"/><rect x="9.500" y="8" width="3.200" height="1.300" fill="#333"/></svg>
<div class="abs" style="left:100px;top:385px;font-size:11.800px;line-height:16px;color:#235a81;white-space:nowrap">Copy</div>
<svg class="abs" style="left:136px;top:388px" width="13" height="13" viewBox="0 0 13 13"><circle cx="6.500" cy="6.500" r="6" fill="#e8524a" stroke="#c0392b" stroke-width=".8"/><ellipse cx="6.500" cy="4" rx="4.500" ry="2.500" fill="#f08a80" opacity=".7"/><rect x="3" y="5.500" width="7" height="2.200" fill="#fff" rx=".5"/></svg>
<div class="abs" style="left:153px;top:385px;font-size:11.800px;line-height:16px;color:#235a81;white-space:nowrap">Delete</div>
<div class="abs" style="left:191px;top:386px;width:43px;text-align:right;font-size:11.800px;line-height:16px;color:#444;white-space:nowrap">9</div>
<div class="abs" style="left:250px;top:386px;font-size:11.800px;line-height:16px;color:#444;white-space:nowrap">Ds.H.Mawar</div>
<div class="abs" style="left:327px;top:386px;font-size:11.800px;line-height:16px;color:#444;white-space:nowrap">ACTIVE</div>
<div class="abs" style="left:406px;top:386px;width:58px;text-align:right;font-size:11.800px;line-height:16px;color:#444;white-space:nowrap;">10</div>
<div class="abs" style="left:3px;top:406px;width:473px;height:24px;background:#dfdfdf"></div>
<div class="abs" style="left:12px;top:412px;width:11px;height:11px;border:1px solid #b0b0b0;border-radius:2px;background:linear-gradient(#f8f8f8,#e4e4e4)"></div>
<svg class="abs" style="left:37px;top:411px" width="14" height="14" viewBox="0 0 14 14"><path d="M1 13 L2 9.500 L10 1.500 C11 .5 13.500 3 12.500 4 L4.500 12 Z" fill="#f2b53a" stroke="#b07a18" stroke-width=".9"/><path d="M1 13 L2 9.500 L4.500 12Z" fill="#f6d9a0" stroke="#8a5a10" stroke-width=".6"/><path d="M9.500 2 L12 4.500" stroke="#d88" stroke-width="1.500"/></svg>
<div class="abs" style="left:54px;top:409px;font-size:11.800px;line-height:16px;color:#235a81;white-space:nowrap">Edit</div>
<svg class="abs" style="left:83px;top:411.5px" width="14" height="16" viewBox="0 0 14 16"><rect x="0" y="1" width="5" height="13" fill="#d0d0d0"/><path d="M0 .6 H5 M0 14.400 H5 M0 4.500 H2 M0 7.500 H2 M0 10.500 H2" stroke="#333" stroke-width="1.200"/><path d="M9.500 7.500 H3.500 M6.500 4.500 L3 7.500 L6.500 10.500 Z" stroke="#5a52d0" stroke-width="1.700" fill="#5a52d0" stroke-linejoin="round"/><path d="M11 1 V4 M9.500 2.500 H12.500" stroke="#5a52d0" stroke-width="1"/><rect x="9.500" y="6" width="3.200" height="1.600" fill="#f0c020"/><rect x="9.500" y="8" width="3.200" height="1.300" fill="#333"/></svg>
<div class="abs" style="left:100px;top:409px;font-size:11.800px;line-height:16px;color:#235a81;white-space:nowrap">Copy</div>
<svg class="abs" style="left:136px;top:412px" width="13" height="13" viewBox="0 0 13 13"><circle cx="6.500" cy="6.500" r="6" fill="#e8524a" stroke="#c0392b" stroke-width=".8"/><ellipse cx="6.500" cy="4" rx="4.500" ry="2.500" fill="#f08a80" opacity=".7"/><rect x="3" y="5.500" width="7" height="2.200" fill="#fff" rx=".5"/></svg>
<div class="abs" style="left:153px;top:409px;font-size:11.800px;line-height:16px;color:#235a81;white-space:nowrap">Delete</div>
<div class="abs" style="left:191px;top:410px;width:43px;text-align:right;font-size:11.800px;line-height:16px;color:#444;white-space:nowrap">10</div>
<div class="abs" style="left:250px;top:410px;font-size:11.800px;line-height:16px;color:#444;white-space:nowrap">Ds.Bebirah</div>
<div class="abs" style="left:327px;top:410px;font-size:11.800px;line-height:16px;color:#444;white-space:nowrap">ACTIVE</div>
<div class="abs" style="left:406px;top:410px;width:58px;text-align:right;font-size:11.800px;line-height:16px;color:#444;white-space:nowrap;">11</div>
<div class="abs" style="left:12px;top:436px;width:11px;height:11px;border:1px solid #b0b0b0;border-radius:2px;background:linear-gradient(#f8f8f8,#e4e4e4)"></div>
<svg class="abs" style="left:37px;top:435px" width="14" height="14" viewBox="0 0 14 14"><path d="M1 13 L2 9.500 L10 1.500 C11 .5 13.500 3 12.500 4 L4.500 12 Z" fill="#f2b53a" stroke="#b07a18" stroke-width=".9"/><path d="M1 13 L2 9.500 L4.500 12Z" fill="#f6d9a0" stroke="#8a5a10" stroke-width=".6"/><path d="M9.500 2 L12 4.500" stroke="#d88" stroke-width="1.500"/></svg>
<div class="abs" style="left:54px;top:433px;font-size:11.800px;line-height:16px;color:#235a81;white-space:nowrap">Edit</div>
<svg class="abs" style="left:83px;top:435.5px" width="14" height="16" viewBox="0 0 14 16"><rect x="0" y="1" width="5" height="13" fill="#d0d0d0"/><path d="M0 .6 H5 M0 14.400 H5 M0 4.500 H2 M0 7.500 H2 M0 10.500 H2" stroke="#333" stroke-width="1.200"/><path d="M9.500 7.500 H3.500 M6.500 4.500 L3 7.500 L6.500 10.500 Z" stroke="#5a52d0" stroke-width="1.700" fill="#5a52d0" stroke-linejoin="round"/><path d="M11 1 V4 M9.500 2.500 H12.500" stroke="#5a52d0" stroke-width="1"/><rect x="9.500" y="6" width="3.200" height="1.600" fill="#f0c020"/><rect x="9.500" y="8" width="3.200" height="1.300" fill="#333"/></svg>
<div class="abs" style="left:100px;top:433px;font-size:11.800px;line-height:16px;color:#235a81;white-space:nowrap">Copy</div>
<svg class="abs" style="left:136px;top:436px" width="13" height="13" viewBox="0 0 13 13"><circle cx="6.500" cy="6.500" r="6" fill="#e8524a" stroke="#c0392b" stroke-width=".8"/><ellipse cx="6.500" cy="4" rx="4.500" ry="2.500" fill="#f08a80" opacity=".7"/><rect x="3" y="5.500" width="7" height="2.200" fill="#fff" rx=".5"/></svg>
<div class="abs" style="left:153px;top:433px;font-size:11.800px;line-height:16px;color:#235a81;white-space:nowrap">Delete</div>
<div class="abs" style="left:191px;top:434px;width:43px;text-align:right;font-size:11.800px;line-height:16px;color:#444;white-space:nowrap">11</div>
<div class="abs" style="left:250px;top:434px;font-size:11.800px;line-height:16px;color:#444;white-space:nowrap">Ds.H Pala</div>
<div class="abs" style="left:327px;top:434px;font-size:11.800px;line-height:16px;color:#444;white-space:nowrap">ACTIVE</div>
<div class="abs" style="left:406px;top:434px;width:58px;text-align:right;font-size:11.800px;line-height:16px;color:#444;white-space:nowrap;font-style:italic;color:#888;">NULL</div>
<div class="abs" style="left:3px;top:454px;width:473px;height:24px;background:#dfdfdf"></div>
<div class="abs" style="left:12px;top:460px;width:11px;height:11px;border:1px solid #b0b0b0;border-radius:2px;background:linear-gradient(#f8f8f8,#e4e4e4)"></div>
<svg class="abs" style="left:37px;top:459px" width="14" height="14" viewBox="0 0 14 14"><path d="M1 13 L2 9.500 L10 1.500 C11 .5 13.500 3 12.500 4 L4.500 12 Z" fill="#f2b53a" stroke="#b07a18" stroke-width=".9"/><path d="M1 13 L2 9.500 L4.500 12Z" fill="#f6d9a0" stroke="#8a5a10" stroke-width=".6"/><path d="M9.500 2 L12 4.500" stroke="#d88" stroke-width="1.500"/></svg>
<div class="abs" style="left:54px;top:457px;font-size:11.800px;line-height:16px;color:#235a81;white-space:nowrap">Edit</div>
<svg class="abs" style="left:83px;top:459.5px" width="14" height="16" viewBox="0 0 14 16"><rect x="0" y="1" width="5" height="13" fill="#d0d0d0"/><path d="M0 .6 H5 M0 14.400 H5 M0 4.500 H2 M0 7.500 H2 M0 10.500 H2" stroke="#333" stroke-width="1.200"/><path d="M9.500 7.500 H3.500 M6.500 4.500 L3 7.500 L6.500 10.500 Z" stroke="#5a52d0" stroke-width="1.700" fill="#5a52d0" stroke-linejoin="round"/><path d="M11 1 V4 M9.500 2.500 H12.500" stroke="#5a52d0" stroke-width="1"/><rect x="9.500" y="6" width="3.200" height="1.600" fill="#f0c020"/><rect x="9.500" y="8" width="3.200" height="1.300" fill="#333"/></svg>
<div class="abs" style="left:100px;top:457px;font-size:11.800px;line-height:16px;color:#235a81;white-space:nowrap">Copy</div>
<svg class="abs" style="left:136px;top:460px" width="13" height="13" viewBox="0 0 13 13"><circle cx="6.500" cy="6.500" r="6" fill="#e8524a" stroke="#c0392b" stroke-width=".8"/><ellipse cx="6.500" cy="4" rx="4.500" ry="2.500" fill="#f08a80" opacity=".7"/><rect x="3" y="5.500" width="7" height="2.200" fill="#fff" rx=".5"/></svg>
<div class="abs" style="left:153px;top:457px;font-size:11.800px;line-height:16px;color:#235a81;white-space:nowrap">Delete</div>
<div class="abs" style="left:191px;top:458px;width:43px;text-align:right;font-size:11.800px;line-height:16px;color:#444;white-space:nowrap">12</div>
<div class="abs" style="left:250px;top:458px;font-size:11.800px;line-height:16px;color:#444;white-space:nowrap">Terantang</div>
<div class="abs" style="left:327px;top:458px;font-size:11.800px;line-height:16px;color:#444;white-space:nowrap">ACTIVE</div>
<div class="abs" style="left:406px;top:458px;width:58px;text-align:right;font-size:11.800px;line-height:16px;color:#444;white-space:nowrap;">7</div>
<div class="abs" style="left:12px;top:484px;width:11px;height:11px;border:1px solid #b0b0b0;border-radius:2px;background:linear-gradient(#f8f8f8,#e4e4e4)"></div>
<svg class="abs" style="left:37px;top:483px" width="14" height="14" viewBox="0 0 14 14"><path d="M1 13 L2 9.500 L10 1.500 C11 .5 13.500 3 12.500 4 L4.500 12 Z" fill="#f2b53a" stroke="#b07a18" stroke-width=".9"/><path d="M1 13 L2 9.500 L4.500 12Z" fill="#f6d9a0" stroke="#8a5a10" stroke-width=".6"/><path d="M9.500 2 L12 4.500" stroke="#d88" stroke-width="1.500"/></svg>
<div class="abs" style="left:54px;top:481px;font-size:11.800px;line-height:16px;color:#235a81;white-space:nowrap">Edit</div>
<svg class="abs" style="left:83px;top:483.5px" width="14" height="16" viewBox="0 0 14 16"><rect x="0" y="1" width="5" height="13" fill="#d0d0d0"/><path d="M0 .6 H5 M0 14.400 H5 M0 4.500 H2 M0 7.500 H2 M0 10.500 H2" stroke="#333" stroke-width="1.200"/><path d="M9.500 7.500 H3.500 M6.500 4.500 L3 7.500 L6.500 10.500 Z" stroke="#5a52d0" stroke-width="1.700" fill="#5a52d0" stroke-linejoin="round"/><path d="M11 1 V4 M9.500 2.500 H12.500" stroke="#5a52d0" stroke-width="1"/><rect x="9.500" y="6" width="3.200" height="1.600" fill="#f0c020"/><rect x="9.500" y="8" width="3.200" height="1.300" fill="#333"/></svg>
<div class="abs" style="left:100px;top:481px;font-size:11.800px;line-height:16px;color:#235a81;white-space:nowrap">Copy</div>
<svg class="abs" style="left:136px;top:484px" width="13" height="13" viewBox="0 0 13 13"><circle cx="6.500" cy="6.500" r="6" fill="#e8524a" stroke="#c0392b" stroke-width=".8"/><ellipse cx="6.500" cy="4" rx="4.500" ry="2.500" fill="#f08a80" opacity=".7"/><rect x="3" y="5.500" width="7" height="2.200" fill="#fff" rx=".5"/></svg>
<div class="abs" style="left:153px;top:481px;font-size:11.800px;line-height:16px;color:#235a81;white-space:nowrap">Delete</div>
<div class="abs" style="left:191px;top:482px;width:43px;text-align:right;font-size:11.800px;line-height:16px;color:#444;white-space:nowrap">13</div>
<div class="abs" style="left:250px;top:482px;font-size:11.800px;line-height:16px;color:#444;white-space:nowrap">Pagatan</div>
<div class="abs" style="left:327px;top:482px;font-size:11.800px;line-height:16px;color:#444;white-space:nowrap">ACTIVE</div>
<div class="abs" style="left:406px;top:482px;width:58px;text-align:right;font-size:11.800px;line-height:16px;color:#444;white-space:nowrap;font-style:italic;color:#888;">NULL</div>
<div class="abs" style="left:3px;top:502px;width:473px;height:24px;background:#dfdfdf"></div>
<div class="abs" style="left:12px;top:508px;width:11px;height:11px;border:1px solid #b0b0b0;border-radius:2px;background:linear-gradient(#f8f8f8,#e4e4e4)"></div>
<svg class="abs" style="left:37px;top:507px" width="14" height="14" viewBox="0 0 14 14"><path d="M1 13 L2 9.500 L10 1.500 C11 .5 13.500 3 12.500 4 L4.500 12 Z" fill="#f2b53a" stroke="#b07a18" stroke-width=".9"/><path d="M1 13 L2 9.500 L4.500 12Z" fill="#f6d9a0" stroke="#8a5a10" stroke-width=".6"/><path d="M9.500 2 L12 4.500" stroke="#d88" stroke-width="1.500"/></svg>
<div class="abs" style="left:54px;top:505px;font-size:11.800px;line-height:16px;color:#235a81;white-space:nowrap">Edit</div>
<svg class="abs" style="left:83px;top:507.5px" width="14" height="16" viewBox="0 0 14 16"><rect x="0" y="1" width="5" height="13" fill="#d0d0d0"/><path d="M0 .6 H5 M0 14.400 H5 M0 4.500 H2 M0 7.500 H2 M0 10.500 H2" stroke="#333" stroke-width="1.200"/><path d="M9.500 7.500 H3.500 M6.500 4.500 L3 7.500 L6.500 10.500 Z" stroke="#5a52d0" stroke-width="1.700" fill="#5a52d0" stroke-linejoin="round"/><path d="M11 1 V4 M9.500 2.500 H12.500" stroke="#5a52d0" stroke-width="1"/><rect x="9.500" y="6" width="3.200" height="1.600" fill="#f0c020"/><rect x="9.500" y="8" width="3.200" height="1.300" fill="#333"/></svg>
<div class="abs" style="left:100px;top:505px;font-size:11.800px;line-height:16px;color:#235a81;white-space:nowrap">Copy</div>
<svg class="abs" style="left:136px;top:508px" width="13" height="13" viewBox="0 0 13 13"><circle cx="6.500" cy="6.500" r="6" fill="#e8524a" stroke="#c0392b" stroke-width=".8"/><ellipse cx="6.500" cy="4" rx="4.500" ry="2.500" fill="#f08a80" opacity=".7"/><rect x="3" y="5.500" width="7" height="2.200" fill="#fff" rx=".5"/></svg>
<div class="abs" style="left:153px;top:505px;font-size:11.800px;line-height:16px;color:#235a81;white-space:nowrap">Delete</div>
<div class="abs" style="left:191px;top:506px;width:43px;text-align:right;font-size:11.800px;line-height:16px;color:#444;white-space:nowrap">14</div>
<div class="abs" style="left:250px;top:506px;font-size:11.800px;line-height:16px;color:#444;white-space:nowrap">Seranau</div>
<div class="abs" style="left:327px;top:506px;font-size:11.800px;line-height:16px;color:#444;white-space:nowrap">ACTIVE</div>
<div class="abs" style="left:406px;top:506px;width:58px;text-align:right;font-size:11.800px;line-height:16px;color:#444;white-space:nowrap;">3</div>
<svg class="abs" style="left:14px;top:540px" width="27" height="16" viewBox="0 0 27 16"><path d="M4.500 3 V13.500 H26" stroke="#111" stroke-width="1.200" fill="none"/><path d="M1 5.500 L4.500 .5 L8 5.500Z" fill="#111"/></svg>
<div class="abs" style="left:53px;top:542px;width:11px;height:11px;border:1px solid #b0b0b0;border-radius:2px;background:linear-gradient(#f8f8f8,#e4e4e4)"></div>
<div class="abs" style="left:73px;top:540px;font-size:11.800px;line-height:16px;color:#235a81;white-space:nowrap">Check all</div>
<div class="abs" style="left:148px;top:540px;font-size:11.800px;line-height:16px;color:#444;white-space:nowrap;font-style:italic">With selected:</div>
<svg class="abs" style="left:234px;top:542px" width="14" height="14" viewBox="0 0 14 14"><path d="M1 13 L2 9.500 L10 1.500 C11 .5 13.500 3 12.500 4 L4.500 12 Z" fill="#f2b53a" stroke="#b07a18" stroke-width=".9"/><path d="M1 13 L2 9.500 L4.500 12Z" fill="#f6d9a0" stroke="#8a5a10" stroke-width=".6"/><path d="M9.500 2 L12 4.500" stroke="#d88" stroke-width="1.500"/></svg>
<div class="abs" style="left:252px;top:541px;font-size:11.800px;line-height:16px;color:#235a81;white-space:nowrap">Edit</div>
<svg class="abs" style="left:290px;top:542.5px" width="14" height="16" viewBox="0 0 14 16"><rect x="0" y="1" width="5" height="13" fill="#d0d0d0"/><path d="M0 .6 H5 M0 14.400 H5 M0 4.500 H2 M0 7.500 H2 M0 10.500 H2" stroke="#333" stroke-width="1.200"/><path d="M9.500 7.500 H3.500 M6.500 4.500 L3 7.500 L6.500 10.500 Z" stroke="#5a52d0" stroke-width="1.700" fill="#5a52d0" stroke-linejoin="round"/><path d="M11 1 V4 M9.500 2.500 H12.500" stroke="#5a52d0" stroke-width="1"/><rect x="9.500" y="6" width="3.200" height="1.600" fill="#f0c020"/><rect x="9.500" y="8" width="3.200" height="1.300" fill="#333"/></svg>
<div class="abs" style="left:308px;top:541px;font-size:11.800px;line-height:16px;color:#235a81;white-space:nowrap">Copy</div>
<svg class="abs" style="left:354px;top:543px" width="13" height="13" viewBox="0 0 13 13"><circle cx="6.500" cy="6.500" r="6" fill="#e8524a" stroke="#c0392b" stroke-width=".8"/><ellipse cx="6.500" cy="4" rx="4.500" ry="2.500" fill="#f08a80" opacity=".7"/><rect x="3" y="5.500" width="7" height="2.200" fill="#fff" rx=".5"/></svg>
<div class="abs" style="left:371px;top:541px;font-size:11.800px;line-height:16px;color:#235a81;white-space:nowrap">Delete</div>
<svg class="abs" style="left:423px;top:542px" width="14" height="14" viewBox="0 0 14 14"><rect x=".5" y=".5" width="11" height="10" fill="#fff" stroke="#7a9fd0"/><rect x=".5" y=".5" width="11" height="3" fill="#b7cdea"/><path d="M.5 6.500 H11.500" stroke="#c5d6ec"/><path d="M5 10 H11 M9 7.500 L12.500 10 L9 12.500" stroke="#3f9a3f" stroke-width="1.800" fill="none"/></svg>
<div class="abs" style="left:441px;top:541px;font-size:11.800px;line-height:16px;color:#235a81;white-space:nowrap">Export</div>
<div class="abs" style="left:30px;top:594px;width:10px;height:10px;border:1px solid #b0b0b0;border-radius:2px;background:linear-gradient(#f8f8f8,#e4e4e4)"></div>
<div class="abs" style="left:50px;top:591px;font-size:11.800px;line-height:16px;color:#444;white-space:nowrap">Show all</div>
<div class="abs" style="left:106px;top:587px;width:1px;height:20px;background:#999"></div>
<div class="abs" style="left:117px;top:591px;font-size:11.800px;line-height:16px;color:#444;white-space:nowrap">Number of rows:</div>
<div class="abs" style="left:213px;top:588px;width:47px;height:21px;border:1px solid #aaa;border-radius:2px;background:#fff;font-size:11.800px;line-height:19px;color:#444;padding-left:6px">25</div>
<svg class="abs" style="left:247px;top:595px" width="7" height="6" viewBox="0 0 7 6"><path d="M0 0 H7 L3.500 6Z" fill="#222"/></svg>
<div class="abs" style="left:292px;top:591px;font-size:11.800px;line-height:16px;color:#444;white-space:nowrap">Filter rows:</div>
<div class="abs" style="left:355px;top:587px;width:154px;height:23px;border:1px solid #aaa;border-radius:2px;background:#fff;font-size:11.800px;line-height:21px;color:#777;padding-left:4px;white-space:nowrap">Search this table</div>
<div class="abs" style="left:515px;top:591px;font-size:11.800px;line-height:16px;color:#444;white-space:nowrap">Sort by key:</div>
<div class="abs" style="left:6px;top:640px;width:560px;height:40px;border:1px solid #aaa;border-radius:4px 0 0 0;background:#eee"></div>
<div class="abs" style="left:11px;top:628px;width:160px;height:24px;border:1px solid #aaa;border-radius:2px;background:#fff;font-size:11.800px;line-height:22px;font-weight:bold;color:#333;text-align:center;white-space:nowrap;box-shadow:1px 1px 2px #ccc">Query results operations</div>
<div class="abs" style="left:78px;top:656px;font-size:11.800px;line-height:16px;color:#235a81;white-space:nowrap">Copy to clipboard</div>
<svg class="abs" style="left:172px;top:658px" width="14" height="14" viewBox="0 0 14 14"><rect x=".5" y=".5" width="11" height="10" fill="#fff" stroke="#7a9fd0"/><rect x=".5" y=".5" width="11" height="3" fill="#b7cdea"/><path d="M.5 6.500 H11.500" stroke="#c5d6ec"/><path d="M5 10 H11 M9 7.500 L12.500 10 L9 12.500" stroke="#3f9a3f" stroke-width="1.800" fill="none"/></svg>
<div class="abs" style="left:191px;top:656px;font-size:11.800px;line-height:16px;color:#235a81;white-space:nowrap">Export</div>
<svg class="abs" style="left:231px;top:658px" width="14" height="14" viewBox="0 0 14 14"><rect x="1" y="6" width="4" height="7" fill="#d9534f"/><rect x="5.500" y="2" width="4" height="11" fill="#5b8fd8"/><rect x="10" y="8" width="3" height="5" fill="#6bb56b"/></svg>
<div class="abs" style="left:250px;top:656px;font-size:11.800px;line-height:16px;color:#235a81;white-space:nowrap">Display chart</div>
<svg class="abs" style="left:326px;top:658px" width="12" height="12" viewBox="0 0 12 12"><rect x=".5" y=".5" width="11" height="11" fill="#eef" stroke="#89a"/><rect x="3" y="3" width="6" height="5" fill="#667"/></svg>
<div class="abs" style="left:343px;top:656px;font-size:11.800px;line-height:16px;color:#235a81;white-space:nowrap">Create view</div>
<div class="abs" style="left:0;top:652px;width:70px;height:16px;background:#d3d3d3;border-top:1px solid #c4c4c4;border-right:1px solid #c4c4c4"></div>
<div class="abs" style="left:8px;top:655px;width:11px;height:10px;background:linear-gradient(135deg,#555,#111);border:1px solid #e8e8e8"></div>
<div class="abs" style="left:24px;top:652px;font-size:11.800px;line-height:16px;color:#555">Console</div>
</div>

<!-- WORD -->
<div class="abs" style="left:757px;top:33px;width:615px;height:704px;background:transparent;box-shadow:0 0 0 0 #000"></div>
<div id="word" class="abs">
<div id="wtitle" class="abs"></div><div id="wtabs" class="abs"></div><div id="ribbon" class="abs"></div>
<div class="abs" style="left:486px;top:2px;width:17px;height:34px;background:#234a83"></div>
<div class="abs" style="left:486px;top:35px;width:93px;height:30px;background:#234a83"></div>
<div class="abs" style="left:491px;top:20px;font-size:8px;color:#cdd;line-height:8px">r..</div>
<svg class="abs" style="left:23px;top:10.500px" width="15" height="15" viewBox="0 0 15 15"><rect x="1.200" y="1.200" width="12.600" height="12.600" fill="none" stroke="#fff" stroke-width="1.500"/><rect x="3.200" y="1.200" width="8.600" height="5.200" fill="none" stroke="#fff" stroke-width="1.300"/><rect x="3.500" y="9" width="8" height="5" fill="#fff"/><rect x="5.200" y="10.600" width="2" height="3.400" fill="#2b579a"/></svg>
<svg class="abs" style="left:51px;top:10px" width="16" height="15" viewBox="0 0 16 15"><path d="M2 5.300 H9 C14.500 5.300 14.500 13 9.500 13.600" fill="none" stroke="#fff" stroke-width="1.900"/><path d="M6 1.300 L1.800 5.300 L6 9.300" fill="none" stroke="#fff" stroke-width="1.900"/></svg>
<svg class="abs" style="left:70px;top:16px" width="6" height="4" viewBox="0 0 6 4"><path d="M0 0 H6 L3 3.500Z" fill="#fff"/></svg>
<svg class="abs" style="left:86px;top:9px" width="16" height="16" viewBox="0 0 16 16"><path d="M4.600 3.500 A5.700 5.700 0 1 0 11.800 4.800" fill="none" stroke="#fff" stroke-width="1.700"/><path d="M9.600 7.200 V2.600 H14.200" fill="none" stroke="#fff" stroke-width="1.700"/></svg>
<svg class="abs" style="left:119px;top:14px" width="7" height="8" viewBox="0 0 7 8"><rect x="0" y="0" width="7" height="1.300" fill="#fff"/><path d="M0 3.500 H7 L3.500 7.500Z" fill="#fff"/></svg>
<div class="abs" id="wtit" style="left:212px;top:10px;font-size:12.500px;line-height:16px;color:#fff;white-space:pre;letter-spacing:-0.6px">Revisi Web CRUD CI Ari.docx</div><div class="abs" style="left:369px;top:10px;font-size:12.500px;line-height:16px;color:#fff">-</div><div class="abs" style="left:380px;top:10px;font-size:12.500px;line-height:16px;color:#fff;letter-spacing:-0.3px">Word</div>
<div class="abs" style="left:505px;top:7px;width:58px;height:19px;background:#fff;border-radius:1px;color:#2b579a;font-size:12.500px;line-height:19px;text-align:center">Sign in</div>
<svg class="abs" style="left:589px;top:11px" width="14" height="11" viewBox="0 0 14 11"><rect x=".6" y=".6" width="13" height="9.500" fill="none" stroke="#fff" stroke-width="1.200"/><path d="M.6 3 H13.500" stroke="#fff"/><path d="M7 9 V5 M5 6.500 L7 4.500 L9 6.500" stroke="#fff" fill="none"/></svg>
<div class="abs" style="left:62px;top:35px;width:42px;height:31px;background:#f3f3f3"></div>
<div class="abs wt" style="letter-spacing:-0.25px;left:21px;top:42px;font-size:12.500px;line-height:16px;white-space:nowrap;color:#fff">File</div>
<div class="abs wt" style="letter-spacing:-0.25px;left:66px;top:42px;font-size:12.500px;line-height:16px;white-space:nowrap;color:#2b579a">Home</div>
<div class="abs wt" style="letter-spacing:-0.25px;left:110px;top:42px;font-size:12.500px;line-height:16px;white-space:nowrap;color:#fff">Insert</div>
<div class="abs wt" style="letter-spacing:-0.25px;left:150px;top:42px;font-size:12.500px;line-height:16px;white-space:nowrap;color:#fff">Design</div>
<div class="abs wt" style="letter-spacing:-0.25px;left:197px;top:42px;font-size:12.500px;line-height:16px;white-space:nowrap;color:#fff">Layout</div>
<div class="abs wt" style="letter-spacing:-0.25px;left:244px;top:42px;font-size:12.500px;line-height:16px;white-space:nowrap;color:#fff;letter-spacing:-0.55px">References</div>
<div class="abs wt" style="letter-spacing:-0.25px;left:312px;top:42px;font-size:12.500px;line-height:16px;white-space:nowrap;color:#fff">Mailings</div>
<div class="abs wt" style="letter-spacing:-0.25px;left:368px;top:42px;font-size:12.500px;line-height:16px;white-space:nowrap;color:#fff">Review</div>
<div class="abs wt" style="letter-spacing:-0.25px;left:416px;top:42px;font-size:12.500px;line-height:16px;white-space:nowrap;color:#fff">View</div>
<div class="abs wt" style="letter-spacing:-0.25px;left:452px;top:42px;font-size:12.500px;line-height:16px;white-space:nowrap;color:#fff">Help</div>
<div class="abs wt" style="letter-spacing:-0.25px;left:490px;top:42px;font-size:12.500px;line-height:16px;white-space:nowrap;color:#fff">Design</div>
<div class="abs wt" style="letter-spacing:-0.25px;left:537px;top:42px;font-size:12.500px;line-height:16px;white-space:nowrap;color:#fff">Layout</div>
<div class="abs" style="left:144px;top:38px;width:1px;height:23px;background:#7f9bc6"></div>
<div class="abs" style="left:191px;top:38px;width:1px;height:23px;background:#7f9bc6"></div>
<div class="abs" style="left:238px;top:38px;width:1px;height:23px;background:#7f9bc6"></div>
<div class="abs" style="left:306px;top:38px;width:1px;height:23px;background:#7f9bc6"></div>
<div class="abs" style="left:362px;top:38px;width:1px;height:23px;background:#7f9bc6"></div>
<div class="abs" style="left:410px;top:38px;width:1px;height:23px;background:#7f9bc6"></div>
<div class="abs" style="left:446px;top:38px;width:1px;height:23px;background:#7f9bc6"></div>
<div class="abs" style="left:482px;top:38px;width:1px;height:23px;background:#7f9bc6"></div>
<div class="abs" style="left:531px;top:38px;width:1px;height:23px;background:#7f9bc6"></div>
<div class="abs" style="left:578px;top:38px;width:1px;height:23px;background:#7f9bc6"></div>
<svg class="abs" style="left:590px;top:39px" width="13" height="19" viewBox="0 0 13 19"><path d="M3.500 12.500 C1 10 .8 7 2 4.500 C3.500 1.500 9 .5 11.500 4.500 C13 7 12 10 9.500 12.500 V14.500 H3.500 Z" fill="none" stroke="#fff" stroke-width="1.300"/><path d="M4 16.500 H9 M5 18.500 H8" stroke="#fff" stroke-width="1.200"/></svg>
<svg class="abs" style="left:18px;top:72px" width="29" height="32" viewBox="0 0 29 32"><rect x="0" y="4" width="24" height="25" rx="1.500" fill="#ebc27d"/><path d="M6 4 H18 V6.500 H6Z" fill="#6e6e6e"/><rect x="9.500" y="1" width="5" height="4" rx="1.500" fill="none" stroke="#6e6e6e" stroke-width="1.400"/><path d="M14.500 12.500 H23 L28 17.500 V31 H14.500 Z" fill="#fff" stroke="#555" stroke-width="1.100"/><path d="M23 12.500 V17.500 H28" fill="none" stroke="#555" stroke-width="1.100"/></svg>
<div class="abs" style="left:16px;top:107px;font-size:12.5px;line-height:15px;color:#333;white-space:nowrap;letter-spacing:-0.55px">Paste</div>
<svg class="abs" style="left:27px;top:128px" width="6" height="4" viewBox="0 0 6 4"><path d="M0 0 H6 L3 3.500Z" fill="#555"/></svg>
<svg class="abs" style="left:54px;top:71px" width="16" height="16" viewBox="0 0 16 16"><path d="M4 0 L10.500 10 M12 0 L5.500 10" stroke="#b4b4b4" stroke-width="1.400" fill="none"/><circle cx="4" cy="12.500" r="2.600" fill="none" stroke="#b4b4b4" stroke-width="1.400"/><circle cx="12" cy="12.500" r="2.600" fill="none" stroke="#b4b4b4" stroke-width="1.400"/></svg>
<svg class="abs" style="left:54px;top:94px" width="16" height="16" viewBox="0 0 16 16"><path d="M.6 1 H6.500 L9 3.500 V11 H.6Z" fill="#f8f8f8" stroke="#b4b4b4" stroke-width="1.100"/><path d="M6 5 H12 L15 8 V15.400 H6Z" fill="#f8f8f8" stroke="#b4b4b4" stroke-width="1.100"/><path d="M8 9 H13 M8 11 H13 M8 13 H13 M2.500 4 H6 M2.500 6 H5 M2.500 8 H5" stroke="#b4b4b4" stroke-width=".9"/></svg>
<svg class="abs" style="left:54px;top:117px" width="17" height="16" viewBox="0 0 17 16"><path d="M16 1.500 L13.500 0 L8.500 5 L11 7.500 Z" fill="#555"/><path d="M8 5 L11.500 8.500 L10 10 L6.500 6.500Z" fill="#777"/><path d="M6 6.500 L10 10.500 L5 15 L.5 10.500 Z" fill="#e8bd77"/></svg>
<div class="abs" style="left:7px;top:142px;font-size:12.5px;line-height:15px;color:#333;white-space:nowrap;letter-spacing:-0.55px">Clipboard</div>
<svg class="abs" style="left:69px;top:146px" width="8" height="8" viewBox="0 0 8 8"><path d="M.5 5 V.5 H5" fill="none" stroke="#666"/><path d="M3 3 L7 7 M7 4 V7 H4" fill="none" stroke="#666"/></svg>
<div class="abs" style="left:80px;top:69px;width:1px;height:84px;background:#c8c8c8"></div>
<div class="abs" style="left:89px;top:69px;width:144px;height:22px;background:#fff;border:1px solid #c6c6c6;font-size:12.500px;line-height:20px;padding-left:3px;color:#333">Calibri</div>
<div class="abs" style="left:233px;top:69px;width:43px;height:22px;background:#fff;border:1px solid #c6c6c6;border-left:none;font-size:12.500px;line-height:20px;padding-left:4px;color:#333">11</div>
<svg class="abs" style="left:222px;top:78px" width="6" height="4" viewBox="0 0 6 4"><path d="M0 0 H6 L3 3.500Z" fill="#555"/></svg>
<svg class="abs" style="left:265px;top:78px" width="6" height="4" viewBox="0 0 6 4"><path d="M0 0 H6 L3 3.500Z" fill="#555"/></svg>
<div class="abs" style="left:95px;top:94px;font-size:13px;line-height:16px;font-weight:bold;color:#444">B</div>
<div class="abs" style="left:119px;top:94px;font-size:13px;line-height:16px;font-style:italic;font-family:'Liberation Serif',serif;font-weight:bold;color:#444">I</div>
<div class="abs" style="left:139px;top:94px;font-size:13px;line-height:14px;color:#444;border-bottom:1.500px solid #444">U</div>
<svg class="abs" style="left:157px;top:101px" width="6" height="4" viewBox="0 0 6 4"><path d="M0 0 H6 L3 3.500Z" fill="#555"/></svg>
<div class="abs" style="left:170px;top:95px;font-size:11px;line-height:14px;color:#444;text-decoration:line-through;letter-spacing:-0.3px">abc</div>
<div class="abs" style="left:194px;top:93px;font-size:13px;line-height:16px;font-weight:bold;color:#444">x</div><div class="abs" style="left:202px;top:102px;font-size:6px;line-height:6px;font-weight:bold;color:#2b6fc0">2</div>
<div class="abs" style="left:216px;top:93px;font-size:13px;line-height:16px;font-weight:bold;color:#444">x</div><div class="abs" style="left:224px;top:94px;font-size:6px;line-height:6px;font-weight:bold;color:#2b6fc0">2</div>
<div class="abs" style="left:237px;top:92px;width:1px;height:21px;background:#c8c8c8"></div>
<svg class="abs" style="left:246px;top:93px" width="17" height="17" viewBox="0 0 17 17"><text x="0" y="9" font-size="10" fill="#555" font-family="Liberation Sans">A</text><path d="M8 6 L15 11 L10.500 16 L4 11.500Z" fill="#ee8090"/><path d="M4 11.500 L8 6 L10 7.500 L6 13Z" fill="#f4a6b0"/></svg>
<svg class="abs" style="left:92px;top:116px" width="17" height="17" viewBox="0 0 17 17"><text x="1.500" y="14.500" font-size="16.500" fill="#fff" stroke="#b9d3f3" stroke-width="3.400" font-family="Liberation Sans">A</text><text x="1.500" y="14.500" font-size="16.500" fill="#fff" stroke="#3b78c4" stroke-width="1.700" paint-order="stroke" font-family="Liberation Sans">A</text></svg>
<svg class="abs" style="left:112px;top:124px" width="6" height="4" viewBox="0 0 6 4"><path d="M0 0 H6 L3 3.500Z" fill="#555"/></svg>
<svg class="abs" style="left:125px;top:116px" width="17" height="17" viewBox="0 0 17 17"><text x="0" y="8" font-size="8.500" fill="#555" font-family="Liberation Sans">ab</text><path d="M15.500 1 L16.500 2.500 L8 11 L5.500 11.500 L6 9Z" fill="#666"/><rect x="0" y="13" width="16" height="4" fill="#ffff00"/></svg>
<svg class="abs" style="left:147px;top:124px" width="6" height="4" viewBox="0 0 6 4"><path d="M0 0 H6 L3 3.500Z" fill="#555"/></svg>
<svg class="abs" style="left:159px;top:116px" width="17" height="17" viewBox="0 0 17 17"><text x="2.500" y="12" font-size="14" fill="#444" font-family="Liberation Sans">A</text><rect x="0" y="13" width="16" height="4" fill="#00b050"/></svg>
<svg class="abs" style="left:181px;top:124px" width="6" height="4" viewBox="0 0 6 4"><path d="M0 0 H6 L3 3.500Z" fill="#555"/></svg>
<div class="abs" style="left:193px;top:116px;font-size:13px;line-height:16px;color:#666">Aa</div>
<svg class="abs" style="left:213px;top:124px" width="6" height="4" viewBox="0 0 6 4"><path d="M0 0 H6 L3 3.500Z" fill="#555"/></svg>
<div class="abs" style="left:227px;top:115px;width:1px;height:21px;background:#c8c8c8"></div>
<div class="abs" style="left:238px;top:116px;font-size:14px;line-height:18px;color:#555">A</div>
<svg class="abs" style="left:246px;top:118px" width="5" height="3" viewBox="0 0 5 3"><path d="M0 3 H5 L2.500 0Z" fill="#2b6fc0"/></svg>
<div class="abs" style="left:261px;top:119px;font-size:11px;line-height:15px;color:#555">A</div>
<svg class="abs" style="left:268px;top:118px" width="5" height="3" viewBox="0 0 5 3"><path d="M0 0 H5 L2.500 3Z" fill="#2b6fc0"/></svg>
<div class="abs" style="left:162px;top:142px;font-size:12.5px;line-height:15px;color:#333;white-space:nowrap;letter-spacing:-0.55px">Font</div>
<svg class="abs" style="left:272px;top:146px" width="8" height="8" viewBox="0 0 8 8"><path d="M.5 5 V.5 H5" fill="none" stroke="#666"/><path d="M3 3 L7 7 M7 4 V7 H4" fill="none" stroke="#666"/></svg>
<div class="abs" style="left:283px;top:69px;width:1px;height:84px;background:#c8c8c8"></div>
<svg class="abs" style="left:295px;top:71px" width="15" height="16" viewBox="0 0 15 16"><circle cx="1.500" cy="2" r="1.500" fill="#3b78c4"/><circle cx="1.500" cy="8" r="1.500" fill="#3b78c4"/><circle cx="1.500" cy="14" r="1.500" fill="#3b78c4"/><path d="M5 2 H14 M5 8 H14 M5 14 H14" stroke="#555" stroke-width="1.200"/></svg>
<svg class="abs" style="left:317px;top:78px" width="6" height="4" viewBox="0 0 6 4"><path d="M0 0 H6 L3 3.500Z" fill="#555"/></svg>
<svg class="abs" style="left:329px;top:71px" width="16" height="16" viewBox="0 0 16 16"><text x="0" y="4.500" font-size="5.500" font-weight="bold" fill="#3b78c4" font-family="Liberation Sans">1</text><text x="0" y="10.500" font-size="5.500" font-weight="bold" fill="#3b78c4" font-family="Liberation Sans">2</text><text x="0" y="16" font-size="5.500" font-weight="bold" fill="#3b78c4" font-family="Liberation Sans">3</text><path d="M5.500 2 H15 M5.500 8 H15 M5.500 14 H15" stroke="#555" stroke-width="1.200"/></svg>
<svg class="abs" style="left:351px;top:78px" width="6" height="4" viewBox="0 0 6 4"><path d="M0 0 H6 L3 3.500Z" fill="#555"/></svg>
<svg class="abs" style="left:362px;top:71px" width="17" height="16" viewBox="0 0 17 16"><text x="0" y="4.500" font-size="5.500" font-weight="bold" fill="#3b78c4" font-family="Liberation Sans">1</text><text x="4" y="10" font-size="5.500" font-weight="bold" fill="#3b78c4" font-family="Liberation Sans">a</text><text x="9" y="16" font-size="5.500" font-weight="bold" fill="#3b78c4" font-family="Liberation Sans">i</text><path d="M5 2 H16 M9 8 H16 M12 14 H16" stroke="#555" stroke-width="1.200" stroke-dasharray="none"/></svg>
<svg class="abs" style="left:383px;top:78px" width="6" height="4" viewBox="0 0 6 4"><path d="M0 0 H6 L3 3.500Z" fill="#555"/></svg>
<div class="abs" style="left:397px;top:69px;width:1px;height:21px;background:#c8c8c8"></div>
<svg class="abs" style="left:405px;top:72px" width="17" height="14" viewBox="0 0 17 14"><path d="M0 .6 H16 M8 4.600 H16 M8 8.600 H16 M0 12.600 H16" stroke="#555" stroke-width="1.200"/><path d="M6.500 6.600 H1 M3.500 3.800 L.8 6.600 L3.500 9.400" stroke="#3b78c4" stroke-width="1.500" fill="none"/></svg>
<svg class="abs" style="left:427px;top:72px" width="17" height="14" viewBox="0 0 17 14"><path d="M0 .6 H16 M8 4.600 H16 M8 8.600 H16 M0 12.600 H16" stroke="#555" stroke-width="1.200"/><path d="M0 6.600 H5.500 M3 3.800 L5.700 6.600 L3 9.400" stroke="#3b78c4" stroke-width="1.500" fill="none"/></svg>
<div class="abs" style="left:314px;top:91px;width:22px;height:23px;background:#c6c6c6"></div>
<svg class="abs" style="left:295px;top:96px" width="16" height="17" viewBox="0 0 16 17"><rect x="0" y="0" width="15" height="1" fill="#555"/><rect x="0" y="3" width="10" height="1" fill="#555"/><rect x="0" y="6" width="15" height="1" fill="#555"/><rect x="0" y="9" width="10" height="1" fill="#555"/><rect x="0" y="12" width="15" height="1" fill="#555"/></svg>
<svg class="abs" style="left:318px;top:96px" width="16" height="17" viewBox="0 0 16 17"><rect x="0" y="0" width="15" height="1" fill="#555"/><rect x="2.5" y="3" width="10" height="1" fill="#555"/><rect x="0" y="6" width="15" height="1" fill="#555"/><rect x="2.5" y="9" width="10" height="1" fill="#555"/><rect x="0" y="12" width="15" height="1" fill="#555"/></svg>
<svg class="abs" style="left:340px;top:96px" width="16" height="17" viewBox="0 0 16 17"><rect x="0" y="0" width="15" height="1" fill="#555"/><rect x="5" y="3" width="10" height="1" fill="#555"/><rect x="0" y="6" width="15" height="1" fill="#555"/><rect x="5" y="9" width="10" height="1" fill="#555"/><rect x="0" y="12" width="15" height="1" fill="#555"/></svg>
<svg class="abs" style="left:362px;top:96px" width="16" height="17" viewBox="0 0 16 17"><rect x="0" y="0" width="15" height="1" fill="#555"/><rect x="0" y="3" width="15" height="1" fill="#555"/><rect x="0" y="6" width="15" height="1" fill="#555"/><rect x="0" y="9" width="15" height="1" fill="#555"/><rect x="0" y="12" width="15" height="1" fill="#555"/></svg>
<div class="abs" style="left:384px;top:92px;width:1px;height:21px;background:#c8c8c8"></div>
<svg class="abs" style="left:392px;top:94px" width="16" height="17" viewBox="0 0 16 17"><path d="M3 1 V16 M.5 4 L3 1 L5.500 4 M.5 13 L3 16 L5.500 13" stroke="#3b78c4" stroke-width="1.300" fill="none"/><path d="M8 3 H15.500 M8 6.500 H15.500 M8 10 H15.500 M8 13.500 H15.500" stroke="#555" stroke-width="1.200"/></svg>
<svg class="abs" style="left:412px;top:101px" width="6" height="4" viewBox="0 0 6 4"><path d="M0 0 H6 L3 3.500Z" fill="#555"/></svg>
<div class="abs" style="left:326px;top:114px;width:34px;height:23px;background:#c6c6c6"></div>
<svg class="abs" style="left:295px;top:116px" width="17" height="18" viewBox="0 0 17 18"><path d="M3 8 L8 2.500 L13 7.500 L8 12.500Z" fill="#fff" stroke="#555" stroke-width="1.100"/><path d="M6 1 V6" stroke="#555"/><path d="M13 6.500 C15.500 8 16 10.500 15 12 C14 10 13 9 12 9Z" fill="#3b78c4"/><rect x=".5" y="14" width="15" height="3" fill="#fff" stroke="#777" stroke-width=".9"/></svg>
<svg class="abs" style="left:317px;top:124px" width="6" height="4" viewBox="0 0 6 4"><path d="M0 0 H6 L3 3.500Z" fill="#555"/></svg>
<svg class="abs" style="left:330px;top:118px" width="15" height="15" viewBox="0 0 15 15"><rect x="0" y="0" width="14" height="14" fill="#fff"/><path d="M0 .5 H14 M0 6.500 H14 M0 13.500 H14" stroke="#555" stroke-width="1" stroke-dasharray="1 1"/><path d="M.5 0 V14 M6.500 0 V14 M13.500 0 V14" stroke="#555" stroke-width="1" stroke-dasharray="1 1"/></svg>
<svg class="abs" style="left:351px;top:124px" width="6" height="4" viewBox="0 0 6 4"><path d="M0 0 H6 L3 3.500Z" fill="#333"/></svg>
<div class="abs" style="left:364px;top:115px;width:1px;height:21px;background:#c8c8c8"></div>
<svg class="abs" style="left:373px;top:116px" width="16" height="18" viewBox="0 0 16 18"><text x="0" y="8" font-size="9" fill="#3b78c4" font-family="Liberation Sans">A</text><text x="0" y="17" font-size="9" fill="#8e44ad" font-family="Liberation Sans">Z</text><path d="M12 1 V16 M9 12.500 L12 16 L15 12.500" stroke="#555" stroke-width="1.200" fill="none"/></svg>
<div class="abs" style="left:395px;top:115px;width:1px;height:21px;background:#c8c8c8"></div>
<div class="abs" style="left:405px;top:115px;font-size:15px;line-height:18px;color:#666;font-weight:bold">&#182;</div>
<div class="abs" style="left:334px;top:142px;font-size:12.5px;line-height:15px;color:#333;white-space:nowrap;letter-spacing:-0.55px">Paragraph</div>
<svg class="abs" style="left:441px;top:146px" width="8" height="8" viewBox="0 0 8 8"><path d="M.5 5 V.5 H5" fill="none" stroke="#666"/><path d="M3 3 L7 7 M7 4 V7 H4" fill="none" stroke="#666"/></svg>
<div class="abs" style="left:453px;top:69px;width:1px;height:84px;background:#c8c8c8"></div>
<svg class="abs" style="left:469px;top:71px" width="32" height="34" viewBox="0 0 32 34"><text x="0" y="22" font-size="28" font-weight="bold" fill="#3b78c4" font-family="Liberation Sans">A</text><path d="M30.500 10 L32 13 L22 23 L19 21Z" fill="#777"/><path d="M18.500 21.500 L21.500 24 C20 28 15 29.500 11 28.500 C14 27 15 23 18.500 21.500Z" fill="#3b78c4"/></svg>
<div class="abs" style="left:468px;top:107px;font-size:12.5px;line-height:15px;color:#333;white-space:nowrap;letter-spacing:-0.55px">Styles</div>
<svg class="abs" style="left:480px;top:128px" width="6" height="4" viewBox="0 0 6 4"><path d="M0 0 H6 L3 3.500Z" fill="#555"/></svg>
<div class="abs" style="left:460px;top:142px;font-size:12.5px;line-height:15px;color:#333;white-space:nowrap;letter-spacing:-0.55px">Styles</div>
<svg class="abs" style="left:500px;top:146px" width="8" height="8" viewBox="0 0 8 8"><path d="M.5 5 V.5 H5" fill="none" stroke="#666"/><path d="M3 3 L7 7 M7 4 V7 H4" fill="none" stroke="#666"/></svg>
<div class="abs" style="left:511px;top:69px;width:1px;height:84px;background:#c8c8c8"></div>
<div class="abs" style="left:523px;top:69px;width:30px;height:30px;background:#fdfdfd;border:1px solid #d2d2d2"></div>
<svg class="abs" style="left:531px;top:77px" width="15" height="15" viewBox="0 0 15 15"><circle cx="9.500" cy="5.500" r="4" fill="none" stroke="#3b78c4" stroke-width="1.700"/><path d="M6.500 8.500 L1.500 13.500" stroke="#3b78c4" stroke-width="2.200"/></svg>
<div class="abs" style="left:520px;top:105px;font-size:12.5px;line-height:15px;color:#333;white-space:nowrap;letter-spacing:-0.55px">Editing</div>
<svg class="abs" style="left:536px;top:126px" width="6" height="4" viewBox="0 0 6 4"><path d="M0 0 H6 L3 3.500Z" fill="#555"/></svg>
<div class="abs" style="left:565px;top:69px;width:1px;height:84px;background:#c8c8c8"></div>
<div class="abs" style="left:0;top:158px;width:603px;height:496px;background:#e6e6e6"></div>
<div class="abs" style="left:3px;top:160px;width:20px;height:18px;background:#dcdcdc"></div><div class="abs" style="left:5px;top:162px;width:14px;height:13px;background:#fdfdfd"></div>
<div class="abs" style="left:10px;top:165px;width:6px;height:7px;border-left:2px solid #666;border-bottom:2px solid #666"></div>
<div class="abs" style="left:34px;top:163px;width:569px;height:10px;background:#fff"></div>
<div class="abs" style="left:34px;top:163px;width:41px;height:10px;background:#c6c6c6"></div>
<div class="abs" style="left:315px;top:163px;width:12px;height:10px;background:#c6c6c6"></div>
<div class="abs" style="left:531px;top:163px;width:72px;height:10px;background:#c6c6c6"></div>
<div class="abs" style="left:37px;top:166px;width:1px;height:5px;background:#666"></div>
<div class="abs" style="left:47px;top:168px;width:1px;height:1px;background:#555"></div>
<div class="abs" style="left:58px;top:168px;width:1px;height:1px;background:#555"></div>
<div class="abs" style="left:69px;top:168px;width:1px;height:1px;background:#555"></div>
<div class="abs" style="left:89px;top:168px;width:1px;height:1px;background:#555"></div>
<div class="abs" style="left:100px;top:168px;width:1px;height:1px;background:#555"></div>
<div class="abs" style="left:111px;top:168px;width:1px;height:1px;background:#555"></div>
<div class="abs" style="left:121px;top:166px;width:1px;height:5px;background:#666"></div>
<div class="abs" style="left:131px;top:168px;width:1px;height:1px;background:#555"></div>
<div class="abs" style="left:142px;top:168px;width:1px;height:1px;background:#555"></div>
<div class="abs" style="left:153px;top:168px;width:1px;height:1px;background:#555"></div>
<div class="abs" style="left:159.0px;top:162px;width:8px;font-size:9.500px;line-height:12px;text-align:center;color:#555">1</div>
<div class="abs" style="left:173px;top:168px;width:1px;height:1px;background:#555"></div>
<div class="abs" style="left:184px;top:168px;width:1px;height:1px;background:#555"></div>
<div class="abs" style="left:195px;top:168px;width:1px;height:1px;background:#555"></div>
<div class="abs" style="left:205px;top:166px;width:1px;height:5px;background:#666"></div>
<div class="abs" style="left:215px;top:168px;width:1px;height:1px;background:#555"></div>
<div class="abs" style="left:226px;top:168px;width:1px;height:1px;background:#555"></div>
<div class="abs" style="left:237px;top:168px;width:1px;height:1px;background:#555"></div>
<div class="abs" style="left:243.0px;top:162px;width:8px;font-size:9.500px;line-height:12px;text-align:center;color:#555">2</div>
<div class="abs" style="left:257px;top:168px;width:1px;height:1px;background:#555"></div>
<div class="abs" style="left:268px;top:168px;width:1px;height:1px;background:#555"></div>
<div class="abs" style="left:279px;top:168px;width:1px;height:1px;background:#555"></div>
<div class="abs" style="left:289px;top:166px;width:1px;height:5px;background:#666"></div>
<div class="abs" style="left:299px;top:168px;width:1px;height:1px;background:#555"></div>
<div class="abs" style="left:310px;top:168px;width:1px;height:1px;background:#555"></div>
<div class="abs" style="left:321px;top:168px;width:1px;height:1px;background:#555"></div>
<div class="abs" style="left:327.0px;top:162px;width:8px;font-size:9.500px;line-height:12px;text-align:center;color:#555">3</div>
<div class="abs" style="left:341px;top:168px;width:1px;height:1px;background:#555"></div>
<div class="abs" style="left:352px;top:168px;width:1px;height:1px;background:#555"></div>
<div class="abs" style="left:363px;top:168px;width:1px;height:1px;background:#555"></div>
<div class="abs" style="left:373px;top:166px;width:1px;height:5px;background:#666"></div>
<div class="abs" style="left:383px;top:168px;width:1px;height:1px;background:#555"></div>
<div class="abs" style="left:394px;top:168px;width:1px;height:1px;background:#555"></div>
<div class="abs" style="left:405px;top:168px;width:1px;height:1px;background:#555"></div>
<div class="abs" style="left:411.0px;top:162px;width:8px;font-size:9.500px;line-height:12px;text-align:center;color:#555">4</div>
<div class="abs" style="left:425px;top:168px;width:1px;height:1px;background:#555"></div>
<div class="abs" style="left:436px;top:168px;width:1px;height:1px;background:#555"></div>
<div class="abs" style="left:447px;top:168px;width:1px;height:1px;background:#555"></div>
<div class="abs" style="left:457px;top:166px;width:1px;height:5px;background:#666"></div>
<div class="abs" style="left:467px;top:168px;width:1px;height:1px;background:#555"></div>
<div class="abs" style="left:478px;top:168px;width:1px;height:1px;background:#555"></div>
<div class="abs" style="left:489px;top:168px;width:1px;height:1px;background:#555"></div>
<div class="abs" style="left:495.0px;top:162px;width:8px;font-size:9.500px;line-height:12px;text-align:center;color:#555">5</div>
<div class="abs" style="left:509px;top:168px;width:1px;height:1px;background:#555"></div>
<div class="abs" style="left:520px;top:168px;width:1px;height:1px;background:#555"></div>
<div class="abs" style="left:531px;top:168px;width:1px;height:1px;background:#555"></div>
<div class="abs" style="left:541px;top:166px;width:1px;height:5px;background:#666"></div>
<div class="abs" style="left:551px;top:168px;width:1px;height:1px;background:#555"></div>
<div class="abs" style="left:562px;top:168px;width:1px;height:1px;background:#555"></div>
<div class="abs" style="left:573px;top:168px;width:1px;height:1px;background:#555"></div>
<div class="abs" style="left:579.0px;top:162px;width:8px;font-size:9.500px;line-height:12px;text-align:center;color:#555">6</div>
<div class="abs" style="left:593px;top:168px;width:1px;height:1px;background:#555"></div>
<svg class="abs" style="left:69px;top:164px" width="8" height="8" viewBox="0 0 8 8"><path d="M1.500 0 V8 M4 0 V8 M6.500 0 V8 M0 1.500 H8 M0 4 H8 M0 6.500 H8" stroke="#666" stroke-width=".8"/></svg>
<svg class="abs" style="left:318px;top:164px" width="8" height="8" viewBox="0 0 8 8"><path d="M1.500 0 V8 M4 0 V8 M6.500 0 V8 M0 1.500 H8 M0 4 H8 M0 6.500 H8" stroke="#666" stroke-width=".8"/></svg>
<svg class="abs" style="left:532px;top:164px" width="8" height="8" viewBox="0 0 8 8"><path d="M1.500 0 V8 M4 0 V8 M6.500 0 V8 M0 1.500 H8 M0 4 H8 M0 6.500 H8" stroke="#666" stroke-width=".8"/></svg>
<svg class="abs" style="left:75px;top:160px" width="10" height="23" viewBox="0 0 10 23"><path d="M.5 .5 H9.500 L5 6.500Z" fill="#fff" stroke="#777" stroke-width=".9"/><path d="M.5 12.500 H9.500 L5 6.500Z" fill="#fff" stroke="#777" stroke-width=".9"/><rect x=".5" y="14.500" width="9" height="6.500" fill="#fff" stroke="#777" stroke-width=".9"/></svg>
<svg class="abs" style="left:311px;top:167px" width="10" height="9" viewBox="0 0 10 9"><path d="M.5 5 L5 .5 L9.500 5 V8.500 H.5Z" fill="#fff" stroke="#777" stroke-width=".9"/></svg>
<div class="abs" style="left:35px;top:182px;width:568px;height:472px;background:#fff;border-left:1px solid #ababab"></div>
<div class="abs" style="left:6px;top:182px;width:11px;height:472px;background:#fff"></div>
<div class="abs" style="left:6px;top:237px;width:11px;height:8px;background:#c6c6c6;z-index:2"></div>
<div class="abs" style="left:6px;top:267px;width:11px;height:8px;background:#c6c6c6;z-index:2"></div>
<div class="abs" style="left:6px;top:297px;width:11px;height:8px;background:#c6c6c6;z-index:2"></div>
<div class="abs" style="left:6px;top:326px;width:11px;height:8px;background:#c6c6c6;z-index:2"></div>
<div class="abs" style="left:6px;top:356px;width:11px;height:8px;background:#c6c6c6;z-index:2"></div>
<div class="abs" style="left:6px;top:386px;width:11px;height:8px;background:#c6c6c6;z-index:2"></div>
<div class="abs" style="left:6px;top:415px;width:11px;height:8px;background:#c6c6c6;z-index:2"></div>
<div class="abs" style="left:6px;top:445px;width:11px;height:8px;background:#c6c6c6;z-index:2"></div>
<div class="abs" style="left:6px;top:475px;width:11px;height:8px;background:#c6c6c6;z-index:2"></div>
<div class="abs" style="left:6px;top:504px;width:11px;height:8px;background:#c6c6c6;z-index:2"></div>
<div class="abs" style="left:6px;top:534px;width:11px;height:8px;background:#c6c6c6;z-index:2"></div>
<div class="abs" style="left:6px;top:564px;width:11px;height:8px;background:#c6c6c6;z-index:2"></div>
<div class="abs" style="left:6px;top:593px;width:11px;height:8px;background:#c6c6c6;z-index:2"></div>
<div class="abs" style="left:6px;top:623px;width:11px;height:8px;background:#c6c6c6;z-index:2"></div>

<div class="abs" style="left:6px;top:199px;width:12px;height:9px;font-size:9.500px;line-height:12px;color:#555;text-align:center;transform:rotate(-90deg);transform-origin:6px 4.500px">4</div>
<div class="abs" style="left:6px;top:282px;width:12px;height:9px;font-size:9.500px;line-height:12px;color:#555;text-align:center;transform:rotate(-90deg);transform-origin:6px 4.500px">5</div>
<div class="abs" style="left:6px;top:366px;width:12px;height:9px;font-size:9.500px;line-height:12px;color:#555;text-align:center;transform:rotate(-90deg);transform-origin:6px 4.500px">6</div>
<div class="abs" style="left:6px;top:450px;width:12px;height:9px;font-size:9.500px;line-height:12px;color:#555;text-align:center;transform:rotate(-90deg);transform-origin:6px 4.500px">7</div>
<div class="abs" style="left:6px;top:534px;width:12px;height:9px;font-size:9.500px;line-height:12px;color:#555;text-align:center;transform:rotate(-90deg);transform-origin:6px 4.500px">8</div>
<div class="abs" style="left:6px;top:618px;width:12px;height:9px;font-size:9.500px;line-height:12px;color:#555;text-align:center;transform:rotate(-90deg);transform-origin:6px 4.500px">9</div>
<div class="abs" style="left:11px;top:193px;width:2px;height:1px;background:#555"></div>
<div class="abs" style="left:11px;top:213px;width:2px;height:1px;background:#555"></div>
<div class="abs" style="left:11px;top:224px;width:2px;height:1px;background:#555"></div>
<div class="abs" style="left:11px;top:235px;width:2px;height:1px;background:#555"></div>
<div class="abs" style="left:9px;top:245px;width:5px;height:1px;background:#666"></div>
<div class="abs" style="left:11px;top:255px;width:2px;height:1px;background:#555"></div>
<div class="abs" style="left:11px;top:266px;width:2px;height:1px;background:#555"></div>
<div class="abs" style="left:11px;top:277px;width:2px;height:1px;background:#555"></div>
<div class="abs" style="left:11px;top:297px;width:2px;height:1px;background:#555"></div>
<div class="abs" style="left:11px;top:308px;width:2px;height:1px;background:#555"></div>
<div class="abs" style="left:11px;top:319px;width:2px;height:1px;background:#555"></div>
<div class="abs" style="left:9px;top:329px;width:5px;height:1px;background:#666"></div>
<div class="abs" style="left:11px;top:339px;width:2px;height:1px;background:#555"></div>
<div class="abs" style="left:11px;top:350px;width:2px;height:1px;background:#555"></div>
<div class="abs" style="left:11px;top:361px;width:2px;height:1px;background:#555"></div>
<div class="abs" style="left:11px;top:381px;width:2px;height:1px;background:#555"></div>
<div class="abs" style="left:11px;top:392px;width:2px;height:1px;background:#555"></div>
<div class="abs" style="left:11px;top:403px;width:2px;height:1px;background:#555"></div>
<div class="abs" style="left:9px;top:413px;width:5px;height:1px;background:#666"></div>
<div class="abs" style="left:11px;top:423px;width:2px;height:1px;background:#555"></div>
<div class="abs" style="left:11px;top:434px;width:2px;height:1px;background:#555"></div>
<div class="abs" style="left:11px;top:445px;width:2px;height:1px;background:#555"></div>
<div class="abs" style="left:11px;top:465px;width:2px;height:1px;background:#555"></div>
<div class="abs" style="left:11px;top:476px;width:2px;height:1px;background:#555"></div>
<div class="abs" style="left:11px;top:487px;width:2px;height:1px;background:#555"></div>
<div class="abs" style="left:9px;top:497px;width:5px;height:1px;background:#666"></div>
<div class="abs" style="left:11px;top:507px;width:2px;height:1px;background:#555"></div>
<div class="abs" style="left:11px;top:518px;width:2px;height:1px;background:#555"></div>
<div class="abs" style="left:11px;top:529px;width:2px;height:1px;background:#555"></div>
<div class="abs" style="left:11px;top:549px;width:2px;height:1px;background:#555"></div>
<div class="abs" style="left:11px;top:560px;width:2px;height:1px;background:#555"></div>
<div class="abs" style="left:11px;top:571px;width:2px;height:1px;background:#555"></div>
<div class="abs" style="left:9px;top:581px;width:5px;height:1px;background:#666"></div>
<div class="abs" style="left:11px;top:591px;width:2px;height:1px;background:#555"></div>
<div class="abs" style="left:11px;top:602px;width:2px;height:1px;background:#555"></div>
<div class="abs" style="left:11px;top:613px;width:2px;height:1px;background:#555"></div>
<div class="abs" style="left:11px;top:633px;width:2px;height:1px;background:#555"></div>
<div class="abs" style="left:11px;top:644px;width:2px;height:1px;background:#555"></div>
<svg class="abs" style="left:60px;top:201px" width="13" height="13" viewBox="0 0 13 13"><rect x=".5" y=".5" width="12" height="12" fill="#fff" stroke="#888"/><path d="M6.500 2 V11 M2 6.500 H11 M5 3.500 L6.500 2 L8 3.500 M5 9.500 L6.500 11 L8 9.500 M3.500 5 L2 6.500 L3.500 8 M9.500 5 L11 6.500 L9.500 8" stroke="#444" stroke-width=".9" fill="none"/></svg>
<div class="abs" style="left:73px;top:214px;width:1px;height:440px;background:#000"></div>
<div class="abs" style="left:323px;top:214px;width:1px;height:440px;background:#000"></div>
<div class="abs" style="left:539px;top:214px;width:1px;height:440px;background:#000"></div>
<div class="abs" style="left:73px;top:214px;width:467px;height:1px;background:#000"></div>
<div class="abs" style="left:73px;top:239px;width:467px;height:1px;background:#000"></div>
<div class="abs" style="left:73px;top:269px;width:467px;height:1px;background:#000"></div>
<div class="abs" style="left:73px;top:299px;width:467px;height:1px;background:#000"></div>
<div class="abs" style="left:73px;top:358px;width:467px;height:1px;background:#000"></div>
<div class="abs" style="left:73px;top:388px;width:467px;height:1px;background:#000"></div>
<div class="abs" style="left:73px;top:417px;width:467px;height:1px;background:#000"></div>
<div class="abs" style="left:73px;top:447px;width:467px;height:1px;background:#000"></div>
<div class="abs" style="left:73px;top:477px;width:467px;height:1px;background:#000"></div>
<div class="abs" style="left:73px;top:506px;width:467px;height:1px;background:#000"></div>
<div class="abs" style="left:73px;top:625px;width:467px;height:1px;background:#000"></div>
<div class="abs" style="left:323px;top:328px;width:217px;height:1px;background:#000"></div>
<div class="abs" style="left:323px;top:536px;width:217px;height:1px;background:#000"></div>
<div class="abs" style="left:323px;top:566px;width:217px;height:1px;background:#000"></div>
<div class="abs" style="left:323px;top:595px;width:217px;height:1px;background:#000"></div>
<div class="abs wc" style="left:78.0px;top:219.5px;width:240px;font-size:13.500px;font-weight:bold;line-height:16px;color:#000;white-space:nowrap;text-align:center">Asal</div>
<div class="abs wc" style="left:312.0px;top:219.5px;width:240px;font-size:13.500px;font-weight:bold;line-height:16px;color:#000;white-space:nowrap;text-align:center">Tujuan</div>
<div class="abs wc" style="left:78.5px;top:248.0px;width:240px;font-size:11.500px;line-height:14px;color:#111;white-space:nowrap;text-align:center">Dermaga Bagendang</div>
<div class="abs wc" style="left:78.5px;top:278.0px;width:240px;font-size:11.500px;line-height:14px;color:#111;white-space:nowrap;text-align:center">Dermaga Tran's Samuda 9</div>
<div class="abs wc" style="left:78.5px;top:323.0px;width:240px;font-size:11.500px;line-height:14px;color:#111;white-space:nowrap;text-align:center">Dermaga Pasar Samuda 10</div>
<div class="abs wc" style="left:78.5px;top:367.0px;width:240px;font-size:11.500px;line-height:14px;color:#111;white-space:nowrap;text-align:center">Dermaga Sebamban 11</div>
<div class="abs wc" style="left:78.5px;top:397.0px;width:240px;font-size:11.500px;line-height:14px;color:#111;white-space:nowrap;text-align:center">Dermaga Sungai Ijum 12</div>
<div class="abs wc" style="left:78.5px;top:426.0px;width:240px;font-size:11.500px;line-height:14px;color:#111;white-space:nowrap;text-align:center">Dermaga Habaring Hurung 7</div>
<div class="abs wc" style="left:78.5px;top:486.0px;width:240px;font-size:11.500px;line-height:14px;color:#111;white-space:nowrap;text-align:center">Dermaga Inhutani 3</div>
<div class="abs wc" style="left:78.5px;top:560.0px;width:240px;font-size:11.500px;line-height:14px;color:#111;white-space:nowrap;text-align:center">Terminal Patih Rumbih 6</div>
<div class="abs wc" style="left:78.5px;top:634.0px;width:240px;font-size:11.500px;line-height:14px;color:#111;white-space:nowrap;text-align:center">Terminal Kedatangan</div>
<div class="abs wc" style="left:311.5px;top:248.0px;width:240px;font-size:11.500px;line-height:14px;color:#111;white-space:nowrap;text-align:center">Desa Hanaut</div>
<div class="abs wc" style="left:311.5px;top:278.0px;width:240px;font-size:11.500px;line-height:14px;color:#111;white-space:nowrap;text-align:center">Desa Bapinang Hulu</div>
<div class="abs wc" style="left:311.5px;top:308.0px;width:240px;font-size:11.500px;line-height:14px;color:#111;white-space:nowrap;text-align:center">Desa Bebaung</div>
<div class="abs wc" style="left:311.5px;top:337.0px;width:240px;font-size:11.500px;line-height:14px;color:#111;white-space:nowrap;text-align:center">Desa Handil Mawar</div>
<div class="abs wc" style="left:311.5px;top:367.0px;width:240px;font-size:11.500px;line-height:14px;color:#111;white-space:nowrap;text-align:center">Desa Bebirah</div>
<div class="abs wc" style="left:311.5px;top:397.0px;width:240px;font-size:11.500px;line-height:14px;color:#111;white-space:nowrap;text-align:center">Desa Handil Pala</div>
<div class="abs wc" style="left:311.5px;top:426.0px;width:240px;font-size:11.500px;line-height:14px;color:#111;white-space:nowrap;text-align:center">Desa Terantang</div>
<div class="abs wc" style="left:311.5px;top:456.0px;width:240px;font-size:11.500px;line-height:14px;color:#111;white-space:nowrap;text-align:center">Desa Pagatan</div>
<div class="abs wc" style="left:311.5px;top:486.0px;width:240px;font-size:11.500px;line-height:14px;color:#111;white-space:nowrap;text-align:center">Desa Seranau</div>
<div class="abs wc" style="left:311.5px;top:515.0px;width:240px;font-size:11.500px;line-height:14px;color:#111;white-space:nowrap;text-align:center">Palangkaraya</div>
<div class="abs wc" style="left:311.5px;top:545.0px;width:240px;font-size:11.500px;line-height:14px;color:#111;white-space:nowrap;text-align:center">Pangkalanbun</div>
<div class="abs wc" style="left:311.5px;top:575.0px;width:240px;font-size:11.500px;line-height:14px;color:#111;white-space:nowrap;text-align:center">Kota Besi</div>
<div class="abs wc" style="left:311.5px;top:604.0px;width:240px;font-size:11.500px;line-height:14px;color:#111;white-space:nowrap;text-align:center">Samuda</div>
<div class="abs" style="left:159px;top:323px;width:1px;height:14px;background:#000"></div>
<div class="abs" style="left:6px;top:649px;width:11px;height:5px;background:#c6c6c6"></div><div class="abs" style="left:0;top:653px;width:603px;height:17px;background:#e6e6e6;border-top:1px solid #c0c0c0"></div>
<div class="abs" style="left:3px;top:654px;width:15px;height:15px;background:#fff;border:1px solid #ababab"></div>
<svg class="abs" style="left:8px;top:658px" width="5" height="8" viewBox="0 0 5 8"><path d="M5 0 V8 L.5 4Z" fill="#666"/></svg>
<div class="abs" style="left:25px;top:654px;width:590px;height:15px;background:#fff;border:1px solid #ababab"></div>
<div class="abs" style="left:0;top:669px;width:603px;height:24px;background:#f3f3f3;border-top:1px solid #d0d0d0"></div>
<div class="abs" id="sb1" style="left:9px;top:673px;font-size:11.800px;line-height:14px;color:#444;white-space:nowrap;letter-spacing:-0.3px">Page 5 of 6</div>
<div class="abs" id="sb2" style="left:85px;top:673px;font-size:11.800px;line-height:14px;color:#444;white-space:nowrap;letter-spacing:-0.3px">451 words</div>
<svg class="abs" style="left:157px;top:673px" width="16" height="14" viewBox="0 0 16 14"><path d="M7 2 C5 .8 2.500 .8 .6 1.500 V11 C2.500 10.300 5 10.300 7 11.500 Z" fill="#fff" stroke="#666" stroke-width="1"/><path d="M7 2 C9 .8 11.500 .8 13.400 1.500 V6" fill="none" stroke="#666"/><path d="M7 11.500 V13" stroke="#666"/><path d="M9 9 L11 11 L14.500 6.500" fill="none" stroke="#666" stroke-width="1.200"/></svg>
<div class="abs" style="left:504px;top:670px;width:38px;height:22px;background:#c6c6c6"></div>
<svg class="abs" style="left:478px;top:673px" width="14" height="14" viewBox="0 0 14 14"><path d="M6.500 1.500 C4.500 .8 2.500 .8 .6 1.200 V11 C2.500 10.600 4.500 10.600 6.500 11.300 C8.500 10.600 10.500 10.600 12.400 11 V1.200 C10.500 .8 8.500 .8 6.500 1.500Z M6.500 1.500 V13" fill="#fff" stroke="#777" stroke-width="1"/><path d="M2 3.500 H5 M2 5.500 H5 M2 7.500 H5 M8 3.500 H11 M8 5.500 H11 M8 7.500 H11" stroke="#777" stroke-width=".8"/></svg>
<svg class="abs" style="left:516px;top:673px" width="14" height="14" viewBox="0 0 14 14"><rect x=".5" y=".5" width="13" height="12" fill="#fff" stroke="#666"/><path d="M2 2.500 H12 M2 4.500 H12 M2 6.500 H12 M2 8.500 H12 M2 10.500 H12" stroke="#777" stroke-width="1"/></svg>
<svg class="abs" style="left:554px;top:673px" width="15" height="14" viewBox="0 0 15 14"><path d="M.5 .5 H11.500 V6 M.5 .5 V10.500 H6" fill="#fff" stroke="#777"/><path d="M2 2.500 H10 M2 4.500 H10 M2 6.500 H7 M2 8.500 H6" stroke="#777" stroke-width="1"/><circle cx="10.500" cy="10" r="3.500" fill="#bbb" stroke="#666" stroke-width=".8"/></svg>
<div class="abs" style="left:585px;top:680px;width:6px;height:2px;background:#444"></div>
<div class="abs" style="left:595px;top:681px;width:10px;height:1px;background:#999"></div>
<div class="abs" style="left:0;top:0;width:1px;height:693px;background:#2b579a"></div>
<div class="abs" style="left:0;top:692px;width:603px;height:1px;background:#2b579a"></div>
</div>

<!-- TASKBAR -->
<div class="abs" style="left:1340px;top:730px;width:26px;height:8px;background:#f1f1f1;border-left:1px solid #ddd"></div>
<div id="taskbar" class="abs">
<svg class="abs" style="left:9px;top:7px" width="17" height="17" viewBox="0 0 17 17"><path d="M0 2.300 L7 1.300 V8 H0Z M8 1.150 L17 0 V8 H8Z M0 9 H7 V15.700 L0 14.700Z M8 9 H17 V17 L8 15.850Z" fill="#fff"/></svg>
<div class="abs" style="left:46px;top:7px;width:16px;height:16px;border:2.500px solid #fff;border-radius:8px"></div>
<svg class="abs" style="left:81px;top:8px" width="17" height="15" viewBox="0 0 17 15"><rect x=".6" y="3.600" width="11" height="7.800" fill="none" stroke="#fff" stroke-width="1.200"/><path d="M.6 .6 H11.600 M.6 14.400 H11.600" stroke="#fff" stroke-width="1.200"/><path d="M15 0 V15" stroke="#fff" stroke-width="1.300"/><rect x="14" y="5" width="2" height="2" fill="#0e1116"/></svg>
<svg class="abs" style="left:120px;top:7px" width="17" height="17" viewBox="0 0 17 17"><path d="M1 8 C1.500 3 5 .5 9 .5 C13.500 .5 16.500 4 16.500 8.500 V10.500 H5.500 C6 13 8 14 10.500 14 C12.500 14 14.500 13.500 15.500 12.800 V16 C14 16.700 12 17 10 17 C5 17 2 14 2 10 C2 7.500 3.500 5.500 5.500 4.500 C4 5 2 6 1 8Z M5.700 7.200 H11.500 C11.500 5 10 4 8.700 4 C7 4 6 5.500 5.700 7.200Z" fill="#1e90e8"/></svg>
<svg class="abs" style="left:156px;top:7px" width="20" height="16" viewBox="0 0 20 16"><path d="M0 1 H7 L9 3 H19 V15 H0Z" fill="#f5c951"/><path d="M0 5 H19 V15 H0Z" fill="#fbe08a"/><path d="M5 10 H14 V16 H11.500 V13 H7.500 V16 H5Z" fill="#3aa0e8"/></svg>
<svg class="abs" style="left:194px;top:6px" width="17" height="18" viewBox="0 0 17 18"><path d="M5 5 V3.500 C5 0 12 0 12 3.500 V5" fill="none" stroke="#fff" stroke-width="1.200"/><path d="M.5 5 H16.500 V17.500 H.5Z" fill="#fff"/><rect x="4.500" y="7.500" width="3.500" height="3.500" fill="#f25022"/><rect x="9" y="7.500" width="3.500" height="3.500" fill="#7fba00"/><rect x="4.500" y="12" width="3.500" height="3.500" fill="#00a4ef"/><rect x="9" y="12" width="3.500" height="3.500" fill="#ffb900"/></svg>
<svg class="abs" style="left:231px;top:9px" width="18" height="11" viewBox="0 0 18 11"><path d="M1 11 C1 4.500 4.500 2 9 2 C13.500 2 17 4.500 17 11Z" fill="#97c03d"/><path d="M4.500 .3 L6.500 3.500 M13.500 .3 L11.500 3.500" stroke="#97c03d" stroke-width="1"/><circle cx="6" cy="6.500" r=".9" fill="#fff"/><circle cx="12" cy="6.500" r=".9" fill="#fff"/></svg>
<svg class="abs" style="left:268px;top:7px" width="18" height="17" viewBox="0 0 18 17"><path d="M13 0 L17.500 2 V15 L13 17 L4.500 9.500 L1.800 11.700 L.3 10.800 V6.200 L1.800 5.300 L4.500 7.500 Z M13 4.500 L8 8.500 L13 12.500Z" fill="#1f8ad2" fill-rule="evenodd"/></svg>
<svg class="abs" style="left:305px;top:8px" width="18" height="15" viewBox="0 0 18 15"><path d="M0 5 L9 0 L18 5 V15 H0Z" fill="#fff"/><path d="M1.500 6 L9 10.500 L16.500 6 L9 2Z" fill="#0e1116"/><path d="M3 7 L15 4 L9 10.500Z" fill="#fff"/></svg>
<svg class="abs" style="left:343px;top:7px" width="17" height="17" viewBox="0 0 17 17"><circle cx="8.500" cy="8.500" r="8.200" fill="#db4437"/><path d="M8.500 8.500 L1.200 4.500 A8.200 8.200 0 0 0 7 16.600 Z" fill="#0f9d58"/><path d="M8.500 8.500 L7 16.600 A8.200 8.200 0 0 0 16.500 6.500 Z" fill="#ffcd40"/><path d="M8.500 8.500 L16.500 6.500 A8.200 8.200 0 0 0 1.200 4.500Z" fill="#db4437"/><circle cx="8.500" cy="8.500" r="3.800" fill="#fff"/><circle cx="8.500" cy="8.500" r="3" fill="#4285f4"/></svg>
<svg class="abs" style="left:381px;top:8px" width="15" height="15" viewBox="0 0 15 15"><rect x="0" y="0" width="15" height="15" rx="1.500" fill="#47b51b"/><path d="M11.500 3 H5.500 C4 3 3 4 3 5.500 V9.500 C3 11 4 12 5.500 12 H11.500 V9.500 H6 V5.500 H11.500Z" fill="#fff"/></svg>
<div class="abs" style="left:407px;top:0;width:36px;height:30px;background:#363b42"></div>
<svg class="abs" style="left:416px;top:7px" width="18" height="17" viewBox="0 0 18 17"><rect x="7" y="1.500" width="10.500" height="14" fill="#fff"/><path d="M10 4.500 H16 M10 7 H16 M10 9.500 H16 M10 12 H16" stroke="#2b579a" stroke-width="1.200"/><path d="M0 2 L10.500 0 V17 L0 15Z" fill="#2b579a"/><text x="1.800" y="12" font-size="8.500" font-weight="bold" fill="#fff" font-family="Liberation Sans">W</text></svg>
<div class="abs" style="left:152px;top:28px;width:28px;height:2px;background:#76b9ed"></div>
<div class="abs" style="left:263px;top:28px;width:28px;height:2px;background:#76b9ed"></div>
<div class="abs" style="left:337px;top:28px;width:28px;height:2px;background:#76b9ed"></div>
<div class="abs" style="left:407px;top:28px;width:36px;height:2px;background:#76b9ed"></div>
<svg class="abs" style="left:1083px;top:7px" width="15" height="16" viewBox="0 0 15 16"><circle cx="10" cy="3.500" r="2.800" fill="none" stroke="#fff" stroke-width="1.100"/><path d="M5.500 11 C6 8 8 7.200 10 7.200 C12.500 7.200 14.300 8.500 14.300 11" fill="none" stroke="#fff" stroke-width="1.100"/><circle cx="4.500" cy="8.500" r="2.500" fill="none" stroke="#fff" stroke-width="1.100"/><path d="M.6 15.500 C.6 12.500 2.500 11.700 4.500 11.700 C6.500 11.700 8.400 12.500 8.400 15.500" fill="none" stroke="#fff" stroke-width="1.100"/></svg>
<svg class="abs" style="left:1114px;top:11px" width="13" height="8" viewBox="0 0 13 8"><path d="M.7 7 L6.500 1 L12.300 7" fill="none" stroke="#fff" stroke-width="1.300"/></svg>
<svg class="abs" style="left:1136px;top:7px" width="16" height="16" viewBox="0 0 16 16"><rect width="16" height="16" rx="1" fill="#f37a20"/><path d="M3 4.500 C3 2.500 6 2.500 8 5 C10 2.500 13 2.500 13 4.500 C13 6 12 6.500 12 8 C12 9.500 13 10 13 11.500 C13 13.500 10 13.500 8 11 C6 13.500 3 13.500 3 11.500 C3 10 4 9.500 4 8 C4 6.500 3 6 3 4.500Z" fill="#fff"/><path d="M5.500 5.500 L10.500 10.500 M10.500 5.500 L5.500 10.500" stroke="#f37a20" stroke-width="1.600"/></svg>
<svg class="abs" style="left:1163px;top:9px" width="14" height="14" viewBox="0 0 14 14"><path d="M1 13 A12 12 0 0 1 13 1" fill="none" stroke="#bbb" stroke-width="1.100"/><path d="M4.500 13 A8.500 8.500 0 0 1 13 4.500" fill="none" stroke="#ddd" stroke-width="1.100"/><path d="M8 13 A5 5 0 0 1 13 8" fill="none" stroke="#fff" stroke-width="1.100"/><circle cx="12" cy="12" r="1.600" fill="#fff"/></svg>
<svg class="abs" style="left:1184px;top:8px" width="17" height="15" viewBox="0 0 17 15"><path d="M.6 5 H3.500 L7.500 1.500 V13.500 L3.500 10 H.6Z" fill="none" stroke="#fff" stroke-width="1.100"/><path d="M9.500 5 C10.500 6.500 10.500 8.500 9.500 10 M11.500 3.500 C13.200 6 13.200 9 11.500 11.500" fill="none" stroke="#fff" stroke-width="1"/><path d="M13.500 2 C16 5.500 16 9.500 13.500 13" fill="none" stroke="#888" stroke-width="1"/></svg>
<svg class="abs" style="left:1208px;top:8px" width="17" height="15" viewBox="0 0 17 15"><rect x="4" y="4.500" width="11.500" height="7" fill="none" stroke="#fff" stroke-width="1.200"/><rect x="15.500" y="6.500" width="1.300" height="3" fill="#fff"/><path d="M1.500 .5 V3 M4 .5 V3 M.5 3 H5 V5.500 C5 7 .5 7 .5 5.500Z M2.750 6.500 V10 H4" fill="none" stroke="#fff" stroke-width="1"/></svg>
<svg class="abs" style="left:1232px;top:9px" width="17" height="12" viewBox="0 0 17 12"><path d="M4 12 C-1 12 -1 6 3.500 5.500 C4 1 10.500 -.5 12.500 4 C17.500 4 17.500 12 13 12Z" fill="#fff"/><path d="M8 4 L6.500 7.500 H8.500 L7.500 10.500 M10 4.500 L9 7 H10.500 L9.500 10" stroke="#0e1116" stroke-width="1" fill="none"/></svg>
<div class="abs" id="clock" style="left:1261px;top:8px;font-size:12.300px;line-height:15px;color:#fff;white-space:nowrap;letter-spacing:-0.5px">4:56 PM</div>
<svg class="abs" style="left:1325px;top:8px" width="16" height="16" viewBox="0 0 17 17"><path d="M0 0 H17 V12.500 H10.500 L8.500 15.500 L6.500 12.500 H0Z" fill="#fff"/><path d="M3 3.500 H14 M3 6 H14 M3 8.500 H10" stroke="#0e1116" stroke-width="1.100"/></svg>
<div class="abs" style="left:1361px;top:0;width:1px;height:30px;background:#555"></div>
</div>

</div></body></html>
